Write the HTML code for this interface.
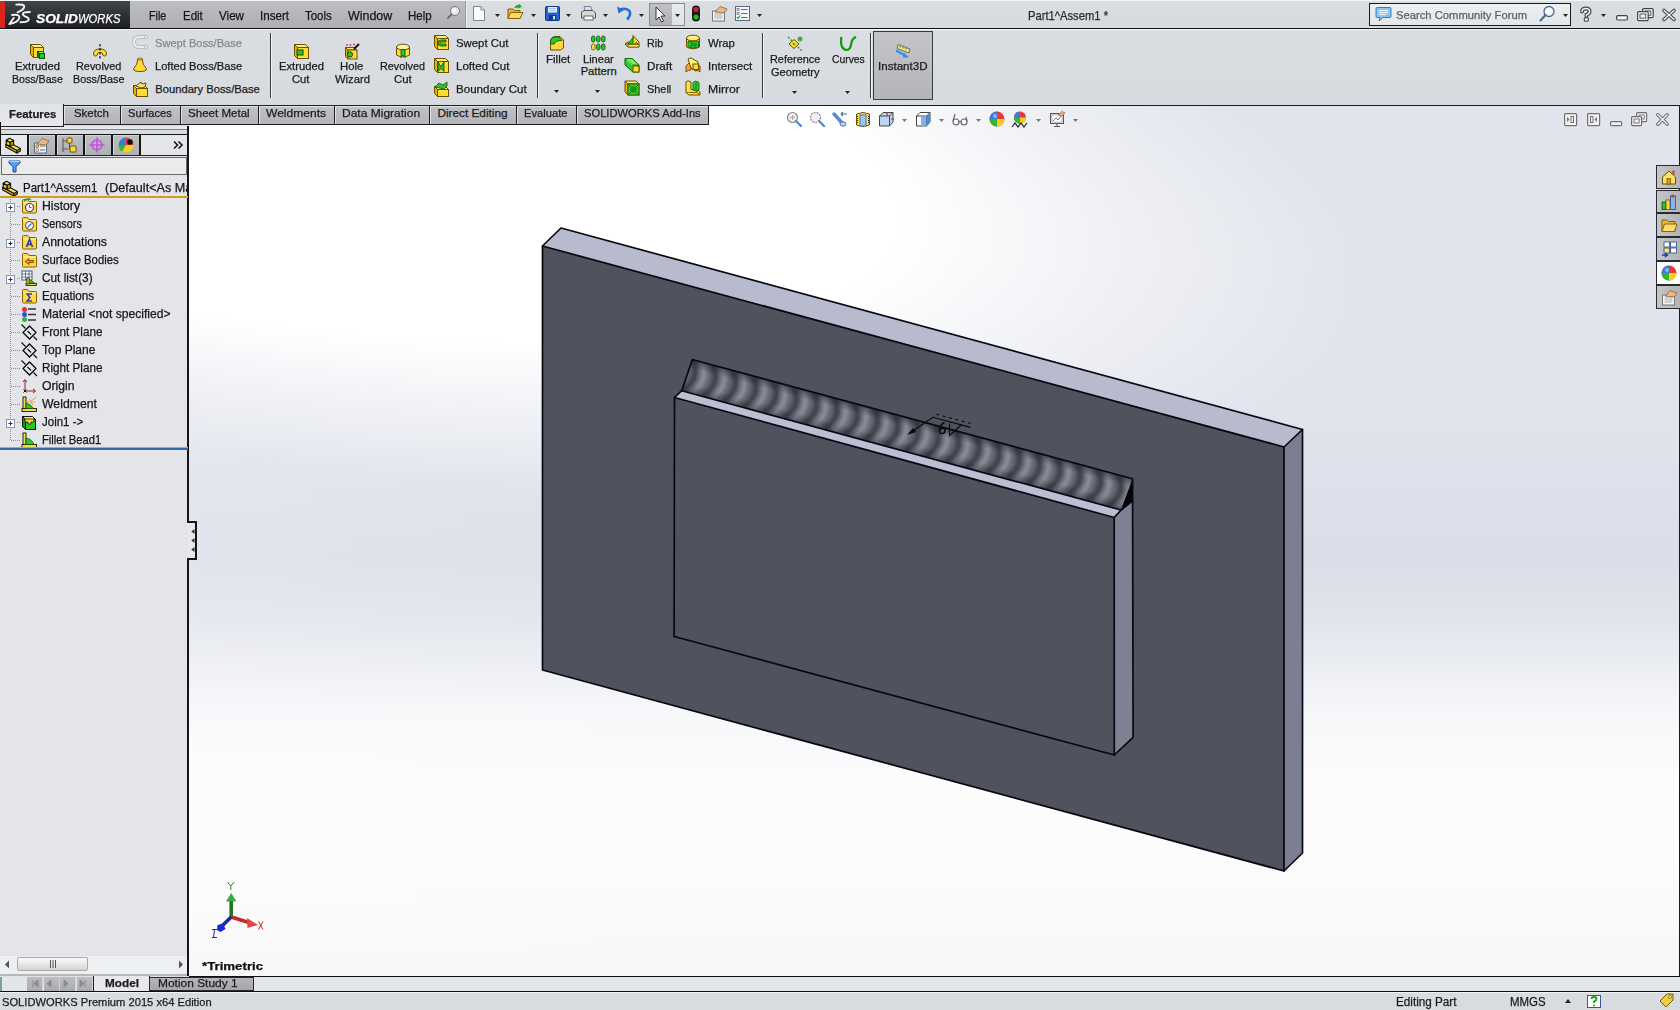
<!DOCTYPE html><html><head><meta charset="utf-8"><title>SOLIDWORKS</title><style>
html,body{margin:0;padding:0;}
body{width:1680px;height:1010px;position:relative;overflow:hidden;background:#dfe1e5;font-family:"Liberation Sans",sans-serif;}
.t{position:absolute;white-space:nowrap;-webkit-text-stroke:0.25px currentColor;}
svg{position:absolute;overflow:visible;}
</style></head><body>
<div style="position:absolute;left:0px;top:0px;width:1680px;height:28px;background:linear-gradient(#dadde2,#d7dadf);"></div>
<div style="position:absolute;left:0px;top:0px;width:1680px;height:1px;background:#f3f4f6;"></div>
<div style="position:absolute;left:0px;top:1px;width:5px;height:27px;background:#d9261c;"></div>
<div style="position:absolute;left:5px;top:1px;width:125px;height:27px;background:linear-gradient(#41454b,#1d1f23);"></div>
<div style="position:absolute;left:130px;top:1px;width:335px;height:27px;background:linear-gradient(#bcbec2,#adafb3);"></div>
<div style="position:absolute;left:465px;top:1px;width:1px;height:27px;background:#9a9ca0;"></div>
<div style="position:absolute;left:466px;top:1px;width:1px;height:27px;background:#eceef0;"></div>
<div style="position:absolute;left:0px;top:28px;width:1680px;height:1px;background:#101010;"></div>
<svg style="position:absolute;left:0px;top:0px;" width="40" height="28" viewBox="0 0 40 28"><path d="M16.3 4.6 Q24.5 3.8 24.3 6.8 Q23.6 10 17.6 12.3" fill="none" stroke="#f4f4f4" stroke-width="1.9" stroke-linecap="round"/><path d="M12 15 Q20.5 13.8 19.2 18.4 Q17.5 22.6 9.2 24.2 L13.8 17.9" fill="none" stroke="#f4f4f4" stroke-width="1.8" stroke-linejoin="round" stroke-linecap="round"/><path d="M29.8 11.9 Q22.8 11.9 22.8 14 Q23 16 27 17.2 Q29.5 18.5 28.2 20.6 Q26.5 22.3 20.5 22.3" fill="none" stroke="#f4f4f4" stroke-width="2" stroke-linecap="round"/></svg>
<div class="t" style="left:35.50px;top:12.03px;font-size:13.2px;line-height:13.2px;color:#fff;font-weight:bold;transform:scaleX(1.0423);transform-origin:0 0;font-style:italic;">SOLID</div>
<div class="t" style="left:77.50px;top:12.03px;font-size:13.2px;line-height:13.2px;color:#fff;font-weight:normal;transform:scaleX(0.8529);transform-origin:0 0;font-style:italic;">WORKS</div>
<div class="t" style="left:149.20px;top:9.89px;font-size:12.3px;line-height:12.3px;color:#161616;font-weight:normal;transform:scaleX(0.8725);transform-origin:0 0;">File</div>
<div class="t" style="left:183.10px;top:9.89px;font-size:12.3px;line-height:12.3px;color:#161616;font-weight:normal;transform:scaleX(0.9338);transform-origin:0 0;">Edit</div>
<div class="t" style="left:219.20px;top:9.89px;font-size:12.3px;line-height:12.3px;color:#161616;font-weight:normal;transform:scaleX(0.9456);transform-origin:0 0;">View</div>
<div class="t" style="left:259.60px;top:9.89px;font-size:12.3px;line-height:12.3px;color:#161616;font-weight:normal;transform:scaleX(0.9459);transform-origin:0 0;">Insert</div>
<div class="t" style="left:305.00px;top:9.89px;font-size:12.3px;line-height:12.3px;color:#161616;font-weight:normal;transform:scaleX(0.9297);transform-origin:0 0;">Tools</div>
<div class="t" style="left:347.70px;top:9.89px;font-size:12.3px;line-height:12.3px;color:#161616;font-weight:normal;transform:scaleX(1.0126);transform-origin:0 0;">Window</div>
<div class="t" style="left:408.00px;top:9.89px;font-size:12.3px;line-height:12.3px;color:#161616;font-weight:normal;transform:scaleX(0.9329);transform-origin:0 0;">Help</div>
<svg style="position:absolute;left:446px;top:5px;" width="14" height="14" viewBox="0 0 14 14"><circle cx="9" cy="6" r="4.5" fill="#e8e8e8" stroke="#777"/><circle cx="8" cy="5" r="2" fill="#fff"/><path d="M6 9 L1.5 13.5" stroke="#555" stroke-width="1.5"/></svg>
<svg style="position:absolute;left:471px;top:5px;" width="16" height="16" viewBox="0 0 16 16"><path d="M2.5 1.5 H10 L13.5 5 V15.5 H2.5 Z" fill="#fbfbfd" stroke="#7b8594"/><path d="M10 1.5 V5 H13.5" fill="#dfe4ea" stroke="#7b8594"/></svg>
<svg style="position:absolute;left:495px;top:14px;" width="5" height="3" viewBox="0 0 5 3"><path d="M0 0 H5 L2.5 3 Z" fill="#222"/></svg>
<svg style="position:absolute;left:507px;top:4px;" width="16" height="16" viewBox="0 0 16 16"><path d="M1 5 H6 L7.5 6.5 H13 V14.5 H1 Z" fill="#e9b53c" stroke="#8a6200"/><path d="M1 14.5 L3.5 8.5 H16 L13 14.5 Z" fill="#ffd966" stroke="#8a6200"/><path d="M8 4 Q10 1 13 2 L12 0.5 M13 2 L11 4" fill="none" stroke="#1fa81f" stroke-width="1.8"/></svg>
<svg style="position:absolute;left:531px;top:14px;" width="5" height="3" viewBox="0 0 5 3"><path d="M0 0 H5 L2.5 3 Z" fill="#222"/></svg>
<svg style="position:absolute;left:544px;top:5px;" width="16" height="16" viewBox="0 0 16 16"><rect x="1.5" y="1.5" width="14" height="14" rx="1" fill="#2a62c9" stroke="#0f3a8a"/><rect x="4" y="2" width="9" height="5.5" fill="#e8eef8"/><path d="M5 3.5 H12 M5 5.5 H12" stroke="#9fb3d6" stroke-width=".8"/><rect x="5" y="10" width="7" height="5.5" fill="#0f3a8a"/><rect x="9" y="11" width="2" height="3.5" fill="#cfe0ff"/></svg>
<svg style="position:absolute;left:566px;top:14px;" width="5" height="3" viewBox="0 0 5 3"><path d="M0 0 H5 L2.5 3 Z" fill="#222"/></svg>
<svg style="position:absolute;left:580px;top:5px;" width="16" height="16" viewBox="0 0 16 16"><path d="M4 1.5 H11 L12 6 H5 Z" fill="#cfe0f2" stroke="#7a8796"/><path d="M1.5 7 L4 5.5 H13 L15.5 8 V13 H1.5 Z" fill="#d8d8d8" stroke="#555"/><rect x="4" y="11" width="9" height="4" fill="#fff" stroke="#666"/></svg>
<svg style="position:absolute;left:603px;top:14px;" width="5" height="3" viewBox="0 0 5 3"><path d="M0 0 H5 L2.5 3 Z" fill="#222"/></svg>
<svg style="position:absolute;left:616px;top:5px;" width="16" height="16" viewBox="0 0 16 16"><path d="M3 5 Q10 2 13.5 6 Q15.5 10 11 14.5" fill="none" stroke="#1f73d6" stroke-width="2.6"/><path d="M1 1.5 L2.5 8.5 L8 5 Z" fill="#1f73d6"/></svg>
<svg style="position:absolute;left:639px;top:14px;" width="5" height="3" viewBox="0 0 5 3"><path d="M0 0 H5 L2.5 3 Z" fill="#222"/></svg>
<div style="position:absolute;left:649px;top:3px;width:36px;height:23px;background:linear-gradient(#e9eaec,#dfe1e4);border:1px solid #8a8c90;box-sizing:border-box;"></div>
<div style="position:absolute;left:650px;top:4px;width:22px;height:21px;background:linear-gradient(#bfc1c5,#b0b2b6);"></div>
<svg style="position:absolute;left:653px;top:6px;" width="16" height="16" viewBox="0 0 16 16"><path d="M3 1 V14 L6 11 L8.5 16 L10.5 15 L8 10 H12 Z" fill="#fff" stroke="#222" stroke-width=".9" stroke-linejoin="round"/></svg>
<svg style="position:absolute;left:675px;top:14px;" width="5" height="3" viewBox="0 0 5 3"><path d="M0 0 H5 L2.5 3 Z" fill="#222"/></svg>
<svg style="position:absolute;left:688px;top:5px;" width="16" height="17" viewBox="0 0 16 17"><rect x="4" y="0.5" width="8" height="16" rx="4" fill="#1a1a1a"/><circle cx="8" cy="4.5" r="2.5" fill="#e02020"/><circle cx="8" cy="12" r="2.5" fill="#20c020"/></svg>
<svg style="position:absolute;left:711px;top:5px;" width="16" height="16" viewBox="0 0 16 16"><rect x="1.5" y="6" width="12" height="10" fill="#f4f4f4" stroke="#777"/><path d="M3.5 9 H11.5 M3.5 11 H11.5 M3.5 13 H11.5" stroke="#999" stroke-width=".8"/><path d="M4 7 L9 1.5 L16 4 L13 8 Z" fill="#e6b98a" stroke="#8a6030" stroke-width=".8"/></svg>
<svg style="position:absolute;left:734px;top:5px;" width="16" height="16" viewBox="0 0 16 16"><rect x="1.5" y="1.5" width="14" height="14" fill="#f6f8fb" stroke="#5a6b80"/><rect x="3" y="3.5" width="2" height="2" fill="none" stroke="#5a6b80" stroke-width=".7"/><rect x="3" y="7.5" width="2" height="2" fill="none" stroke="#5a6b80" stroke-width=".7"/><path d="M3 12 L4 13.5 L6 10.5" stroke="#1a9a1a" stroke-width="1.2" fill="none"/><path d="M7 4.5 H13.5 M7 8.5 H13.5 M7 12.5 H13.5" stroke="#5a6b80" stroke-width="1"/></svg>
<svg style="position:absolute;left:757px;top:14px;" width="5" height="3" viewBox="0 0 5 3"><path d="M0 0 H5 L2.5 3 Z" fill="#222"/></svg>
<div class="t" style="left:1028.00px;top:9.96px;font-size:12.1px;line-height:12.1px;color:#2a2a2a;font-weight:normal;transform:scaleX(0.9265);transform-origin:0 0;">Part1^Assem1 *</div>
<div style="position:absolute;left:1369px;top:3px;width:202px;height:23px;border:1px solid #1a1a1a;background:linear-gradient(#eef0f3,#e3e6ea);box-sizing:border-box;"></div>
<svg style="position:absolute;left:1375px;top:6px;" width="17" height="16" viewBox="0 0 17 16"><path d="M2 1.5 H15 Q16 1.5 16 3 V10 Q16 11.5 15 11.5 H8 L4 15 L5 11.5 H2 Q1 11.5 1 10 V3 Q1 1.5 2 1.5Z" fill="#8cc4f0" stroke="#3a7ac0"/><path d="M4 4.5 H13 M4 6.5 H13 M4 8.5 H11" stroke="#fff" stroke-width=".9"/></svg>
<div class="t" style="left:1396.00px;top:10.13px;font-size:11.3px;line-height:11.3px;color:#5d6066;font-weight:normal;transform:scaleX(0.9936);transform-origin:0 0;">Search Community Forum</div>
<svg style="position:absolute;left:1539px;top:5px;" width="17" height="17" viewBox="0 0 17 17"><circle cx="10" cy="6.5" r="5" fill="#f4f8fc" stroke="#4a6a90" stroke-width="1.3"/><path d="M6.5 10 L1.5 15.5" stroke="#4a6a90" stroke-width="2.2" stroke-linecap="round"/></svg>
<svg style="position:absolute;left:1563px;top:14px;" width="5" height="3" viewBox="0 0 5 3"><path d="M0 0 H5 L2.5 3 Z" fill="#222"/></svg>
<svg style="position:absolute;left:1579px;top:7px;" width="13" height="15" viewBox="0 0 13 15"><path d="M3 4.5 Q3 1.5 6.8 1.5 Q10.6 1.5 10.6 4.5 Q10.6 6.8 7.5 7.8 V9" fill="none" stroke="#444" stroke-width="3.8" stroke-linecap="round"/><path d="M3 4.5 Q3 1.5 6.8 1.5 Q10.6 1.5 10.6 4.5 Q10.6 6.8 7.5 7.8 V9" fill="none" stroke="#f4f4f4" stroke-width="1.4" stroke-linecap="round"/><rect x="5.3" y="10.6" width="4" height="3.6" rx="1" fill="#f4f4f4" stroke="#444" stroke-width="1.1"/></svg>
<svg style="position:absolute;left:1601px;top:14px;" width="5" height="3" viewBox="0 0 5 3"><path d="M0 0 H5 L2.5 3 Z" fill="#222"/></svg>
<svg style="position:absolute;left:1616px;top:15px;" width="12" height="6" viewBox="0 0 12 6"><rect x="0.6" y="0.6" width="10.8" height="4.4" rx="1.2" fill="#f4f4f4" stroke="#444" stroke-width="1.2"/></svg>
<svg style="position:absolute;left:1637px;top:8px;" width="17" height="13" viewBox="0 0 17 13"><rect x="5.6" y="0.6" width="10.6" height="9" rx="1" fill="#f4f4f4" stroke="#444" stroke-width="1.2"/><rect x="8" y="3" width="5.8" height="4.2" fill="none" stroke="#444" stroke-width=".9"/><rect x="0.6" y="3.6" width="10.6" height="9" rx="1" fill="#f4f4f4" stroke="#444" stroke-width="1.2"/><rect x="3" y="6" width="5.8" height="4.2" fill="none" stroke="#444" stroke-width=".9"/></svg>
<svg style="position:absolute;left:1662px;top:9px;" width="14" height="12" viewBox="0 0 14 12"><path d="M2 1.5 L12 10.5 M12 1.5 L2 10.5" stroke="#444" stroke-width="3.6" stroke-linecap="round"/><path d="M2 1.5 L12 10.5 M12 1.5 L2 10.5" stroke="#f4f4f4" stroke-width="1.4" stroke-linecap="round"/></svg>
<div style="position:absolute;left:0px;top:29px;width:1680px;height:76px;background:linear-gradient(#dadde2,#d7dadf);"></div>
<div style="position:absolute;left:0px;top:29px;width:1680px;height:1px;background:#f4f5f7;"></div>
<div style="position:absolute;left:270px;top:33px;width:1px;height:65px;background:#3a3a3a;"></div>
<div style="position:absolute;left:271px;top:33px;width:1px;height:65px;background:#f2f3f5;"></div>
<div style="position:absolute;left:537px;top:33px;width:1px;height:65px;background:#3a3a3a;"></div>
<div style="position:absolute;left:538px;top:33px;width:1px;height:65px;background:#f2f3f5;"></div>
<div style="position:absolute;left:762px;top:33px;width:1px;height:65px;background:#3a3a3a;"></div>
<div style="position:absolute;left:763px;top:33px;width:1px;height:65px;background:#f2f3f5;"></div>
<div style="position:absolute;left:870px;top:33px;width:1px;height:65px;background:#3a3a3a;"></div>
<div style="position:absolute;left:871px;top:33px;width:1px;height:65px;background:#f2f3f5;"></div>
<div style="position:absolute;left:873px;top:31px;width:60px;height:69px;background:linear-gradient(#c3c5c9,#b3b5b9);border:1px solid #3c3c3c;box-sizing:border-box;"></div>
<svg style="position:absolute;left:29px;top:43px;" width="16" height="16" viewBox="0 0 16 16"><path d="M1.5 1.5 H11.5 L14.5 4.5 H4.5 Z" fill="#fff27a" stroke="#6b5000" stroke-width="1" stroke-linejoin="round"/><path d="M1.5 1.5 L4.5 4.5 V14.5 L1.5 11.5 Z" fill="#e8b400" stroke="#6b5000" stroke-width="1" stroke-linejoin="round"/><rect x="4.5" y="4.5" width="10" height="10" fill="#ffdc2e" stroke="#6b5000" stroke-width="1"/><path d="M8.5 8.5 H13.5 L15.5 10.5 H10.5 Z" fill="#8fff6a" stroke="#0b4d0b" stroke-width="1" stroke-linejoin="round"/><path d="M8.5 8.5 L10.5 10.5 V15.5 L8.5 13.5 Z" fill="#138a13" stroke="#0b4d0b" stroke-width="1" stroke-linejoin="round"/><rect x="10.5" y="10.5" width="5" height="5" fill="#2ec42e" stroke="#0b4d0b" stroke-width="1"/></svg>
<div class="t" style="left:14.50px;top:60.92px;font-size:11.2px;line-height:11.2px;color:#1b1b1b;font-weight:normal;transform:scaleX(1.0049);transform-origin:0 0;">Extruded</div>
<div class="t" style="left:11.70px;top:73.92px;font-size:11.2px;line-height:11.2px;color:#1b1b1b;font-weight:normal;transform:scaleX(0.9498);transform-origin:0 0;">Boss/Base</div>
<svg style="position:absolute;left:92px;top:43px;" width="16" height="16" viewBox="0 0 16 16"><path d="M1.5 11 Q1.5 6 8 6 Q14.5 6 14.5 11 Q14.5 13 12.5 13 Q10.5 13 10.5 11 Q10.5 9.5 8 9.5 Q5.5 9.5 5.5 11 Q5.5 13 3.5 13 Q1.5 13 1.5 11Z" fill="#ffd93a" stroke="#6b5000"/><path d="M8 1 V16" stroke="#111" stroke-width="1.2" stroke-dasharray="2.5 1.5"/></svg>
<div class="t" style="left:76.30px;top:60.92px;font-size:11.2px;line-height:11.2px;color:#1b1b1b;font-weight:normal;transform:scaleX(0.9734);transform-origin:0 0;">Revolved</div>
<div class="t" style="left:73.30px;top:73.92px;font-size:11.2px;line-height:11.2px;color:#1b1b1b;font-weight:normal;transform:scaleX(0.9610);transform-origin:0 0;">Boss/Base</div>
<svg style="position:absolute;left:132px;top:34px;" width="16" height="16" viewBox="0 0 16 16"><path d="M14 3 H7 Q2 3 2 8 Q2 13 7 13 H14" fill="none" stroke="#bdbdbd" stroke-width="4"/><path d="M14 3 H7 Q2 3 2 8 Q2 13 7 13 H14" fill="none" stroke="#ececec" stroke-width="2"/><ellipse cx="14" cy="3" rx="1.5" ry="2" fill="#eee" stroke="#bbb"/><ellipse cx="14" cy="13" rx="1.5" ry="2" fill="#eee" stroke="#bbb"/></svg>
<div class="t" style="left:155.00px;top:37.92px;font-size:11.2px;line-height:11.2px;color:#85888d;font-weight:normal;transform:scaleX(0.9922);transform-origin:0 0;">Swept Boss/Base</div>
<svg style="position:absolute;left:132px;top:57px;" width="16" height="16" viewBox="0 0 16 16"><path d="M6 1.5 H10 Q10.5 8 14.5 12 Q14.5 14.5 8 14.5 Q1.5 14.5 1.5 12 Q5.5 8 6 1.5Z" fill="#ffd93a" stroke="#6b5000"/><ellipse cx="8" cy="2" rx="2" ry="1" fill="#fff3a6" stroke="#6b5000" stroke-width=".8"/></svg>
<div class="t" style="left:155.30px;top:60.92px;font-size:11.2px;line-height:11.2px;color:#1b1b1b;font-weight:normal;transform:scaleX(0.9943);transform-origin:0 0;">Lofted Boss/Base</div>
<svg style="position:absolute;left:132px;top:80px;" width="16" height="16" viewBox="0 0 16 16"><path d="M1.5 5.5 H12.5 L15.5 8.5 H4.5 Z" fill="#fff27a" stroke="#6b5000" stroke-width="1" stroke-linejoin="round"/><path d="M1.5 5.5 L4.5 8.5 V16.5 L1.5 13.5 Z" fill="#e8b400" stroke="#6b5000" stroke-width="1" stroke-linejoin="round"/><rect x="4.5" y="8.5" width="11" height="8" fill="#ffdc2e" stroke="#6b5000" stroke-width="1"/><path d="M4 6 L9 2 L10 4 L14 3 L13 7 L9 8 Z" fill="#ffe066" stroke="#6b5000"/></svg>
<div class="t" style="left:155.30px;top:83.92px;font-size:11.2px;line-height:11.2px;color:#1b1b1b;font-weight:normal;">Boundary Boss/Base</div>
<svg style="position:absolute;left:293px;top:43px;" width="16" height="16" viewBox="0 0 16 16"><path d="M1.5 1.5 H12.5 L15.5 4.5 H4.5 Z" fill="#fff27a" stroke="#6b5000" stroke-width="1" stroke-linejoin="round"/><path d="M1.5 1.5 L4.5 4.5 V15.5 L1.5 12.5 Z" fill="#e8b400" stroke="#6b5000" stroke-width="1" stroke-linejoin="round"/><rect x="4.5" y="4.5" width="11" height="11" fill="#ffdc2e" stroke="#6b5000" stroke-width="1"/><rect x="4" y="7" width="6" height="5" fill="#2ec42e" stroke="#0b4d0b"/></svg>
<div class="t" style="left:278.70px;top:60.92px;font-size:11.2px;line-height:11.2px;color:#1b1b1b;font-weight:normal;transform:scaleX(1.0049);transform-origin:0 0;">Extruded</div>
<div class="t" style="left:292.45px;top:73.92px;font-size:11.2px;line-height:11.2px;color:#1b1b1b;font-weight:normal;transform:scaleX(1.0045);transform-origin:0 0;">Cut</div>
<svg style="position:absolute;left:344px;top:43px;" width="16" height="16" viewBox="0 0 16 16"><path d="M1.5 4.5 H10.5 L13.0 7.0 H4.0 Z" fill="#fff27a" stroke="#6b5000" stroke-width="1" stroke-linejoin="round"/><path d="M1.5 4.5 L4.0 7.0 V16.0 L1.5 13.5 Z" fill="#e8b400" stroke="#6b5000" stroke-width="1" stroke-linejoin="round"/><rect x="4.0" y="7.0" width="9" height="9" fill="#ffdc2e" stroke="#6b5000" stroke-width="1"/><circle cx="6" cy="11.5" r="2.6" fill="#2ec42e" stroke="#0b4d0b"/><path d="M10 6 L15 1" stroke="#111" stroke-width="2"/><circle cx="3" cy="2" r=".9" fill="#d33"/><circle cx="6.5" cy="2" r=".9" fill="#d33"/><circle cx="10" cy="1.5" r=".9" fill="#d33"/></svg>
<div class="t" style="left:340.30px;top:60.92px;font-size:11.2px;line-height:11.2px;color:#1b1b1b;font-weight:normal;transform:scaleX(1.0167);transform-origin:0 0;">Hole</div>
<div class="t" style="left:334.70px;top:73.92px;font-size:11.2px;line-height:11.2px;color:#1b1b1b;font-weight:normal;transform:scaleX(1.0054);transform-origin:0 0;">Wizard</div>
<svg style="position:absolute;left:395px;top:43px;" width="16" height="16" viewBox="0 0 16 16"><path d="M1.5 4 V12 Q8 16 14.5 12 V4" fill="#ffd93a" stroke="#6b5000"/><ellipse cx="8" cy="4" rx="6.5" ry="2.8" fill="#fff3a6" stroke="#6b5000"/><path d="M6 6.5 L6 14.5 L8 12 L10 14.5 L10 6.5 Z" fill="#2ec42e" stroke="#0b4d0b" stroke-width=".8"/></svg>
<div class="t" style="left:380.30px;top:60.92px;font-size:11.2px;line-height:11.2px;color:#1b1b1b;font-weight:normal;transform:scaleX(0.9648);transform-origin:0 0;">Revolved</div>
<div class="t" style="left:394.20px;top:73.92px;font-size:11.2px;line-height:11.2px;color:#1b1b1b;font-weight:normal;transform:scaleX(1.0217);transform-origin:0 0;">Cut</div>
<svg style="position:absolute;left:433px;top:34px;" width="16" height="16" viewBox="0 0 16 16"><path d="M1.5 1.5 H12.5 L15.5 4.5 H4.5 Z" fill="#fff27a" stroke="#6b5000" stroke-width="1" stroke-linejoin="round"/><path d="M1.5 1.5 L4.5 4.5 V15.5 L1.5 12.5 Z" fill="#e8b400" stroke="#6b5000" stroke-width="1" stroke-linejoin="round"/><rect x="4.5" y="4.5" width="11" height="11" fill="#ffdc2e" stroke="#6b5000" stroke-width="1"/><path d="M13 6 H8 Q5 6 5 9 Q5 12 8 12 H13 V10 H8 Q7 10 7 9 Q7 8 8 8 H13Z" fill="#2ec42e" stroke="#0b4d0b" stroke-width=".8"/></svg>
<div class="t" style="left:456.30px;top:37.92px;font-size:11.2px;line-height:11.2px;color:#1b1b1b;font-weight:normal;transform:scaleX(1.0150);transform-origin:0 0;">Swept Cut</div>
<svg style="position:absolute;left:433px;top:57px;" width="16" height="16" viewBox="0 0 16 16"><path d="M1.5 1.5 H12.5 L15.5 4.5 H4.5 Z" fill="#fff27a" stroke="#6b5000" stroke-width="1" stroke-linejoin="round"/><path d="M1.5 1.5 L4.5 4.5 V15.5 L1.5 12.5 Z" fill="#e8b400" stroke="#6b5000" stroke-width="1" stroke-linejoin="round"/><rect x="4.5" y="4.5" width="11" height="11" fill="#ffdc2e" stroke="#6b5000" stroke-width="1"/><path d="M5 4.5 L8 10 L11 4.5 L11 14.5 L8 11.5 L5 14.5 Z" fill="#2ec42e" stroke="#0b4d0b" stroke-width=".8"/></svg>
<div class="t" style="left:456.30px;top:60.92px;font-size:11.2px;line-height:11.2px;color:#1b1b1b;font-weight:normal;transform:scaleX(1.0344);transform-origin:0 0;">Lofted Cut</div>
<svg style="position:absolute;left:433px;top:80px;" width="16" height="16" viewBox="0 0 16 16"><path d="M1.5 6.5 H12.5 L15.5 9.5 H4.5 Z" fill="#fff27a" stroke="#6b5000" stroke-width="1" stroke-linejoin="round"/><path d="M1.5 6.5 L4.5 9.5 V16.5 L1.5 13.5 Z" fill="#e8b400" stroke="#6b5000" stroke-width="1" stroke-linejoin="round"/><rect x="4.5" y="9.5" width="11" height="7" fill="#ffdc2e" stroke="#6b5000" stroke-width="1"/><path d="M2 7 L6 3 L10 5 L14 2 L14 6 L11 9 Z" fill="#2ec42e" stroke="#0b4d0b" stroke-width=".8"/></svg>
<div class="t" style="left:456.30px;top:83.92px;font-size:11.2px;line-height:11.2px;color:#1b1b1b;font-weight:normal;transform:scaleX(1.0333);transform-origin:0 0;">Boundary Cut</div>
<svg style="position:absolute;left:549px;top:35px;" width="16" height="16" viewBox="0 0 16 16"><path d="M1.5 7 Q1.5 1.5 7 1.5 H11 L14.5 5 V13 L11.5 15 H1.5 Z" fill="#ffd93a" stroke="#6b5000"/><path d="M1.5 7.5 Q1.5 2 7 2 H10 L13 5.5 Q6 5.5 5.5 9 H1.5Z" fill="#2ec42e" stroke="#0b4d0b" stroke-width=".8"/></svg>
<div class="t" style="left:545.75px;top:53.72px;font-size:11.2px;line-height:11.2px;color:#1b1b1b;font-weight:normal;transform:scaleX(1.0286);transform-origin:0 0;">Fillet</div>
<svg style="position:absolute;left:554px;top:90px;" width="5" height="3" viewBox="0 0 5 3"><path d="M0 0 H5 L2.5 3 Z" fill="#222"/></svg>
<svg style="position:absolute;left:590px;top:35px;" width="16" height="16" viewBox="0 0 16 16"><rect x="1.5" y="1" width="3.5" height="6" rx="1.7" fill="#2ec42e" stroke="#0b4d0b" stroke-width=".8"/><rect x="1.5" y="9" width="3.5" height="6" rx="1.7" fill="#ffd93a" stroke="#6b5000" stroke-width=".8"/><rect x="6.5" y="1" width="3.5" height="6" rx="1.7" fill="#2ec42e" stroke="#0b4d0b" stroke-width=".8"/><rect x="6.5" y="9" width="3.5" height="6" rx="1.7" fill="#2ec42e" stroke="#0b4d0b" stroke-width=".8"/><rect x="11.5" y="1" width="3.5" height="6" rx="1.7" fill="#2ec42e" stroke="#0b4d0b" stroke-width=".8"/><rect x="11.5" y="9" width="3.5" height="6" rx="1.7" fill="#2ec42e" stroke="#0b4d0b" stroke-width=".8"/></svg>
<div class="t" style="left:583.20px;top:53.72px;font-size:11.2px;line-height:11.2px;color:#1b1b1b;font-weight:normal;transform:scaleX(0.9901);transform-origin:0 0;">Linear</div>
<div class="t" style="left:580.65px;top:66.42px;font-size:11.2px;line-height:11.2px;color:#1b1b1b;font-weight:normal;">Pattern</div>
<svg style="position:absolute;left:595px;top:90px;" width="5" height="3" viewBox="0 0 5 3"><path d="M0 0 H5 L2.5 3 Z" fill="#222"/></svg>
<svg style="position:absolute;left:624px;top:34px;" width="16" height="16" viewBox="0 0 16 16"><path d="M1 10 L4 13 H15 V8 L9 1.5 V8 H4 Z" fill="#ffdc2e" stroke="#6b5000"/><path d="M1 10 H12 V8 L15 11" fill="none" stroke="#6b5000"/><path d="M4 10 L9 3.5 V10 Z" fill="#2ad02a" stroke="#0b5a0b" stroke-width=".8"/><path d="M4 13 H15 V10.5 H4 Z" fill="#ffe866" stroke="#6b5000" stroke-width=".8"/></svg>
<div class="t" style="left:647.30px;top:37.72px;font-size:11.2px;line-height:11.2px;color:#1b1b1b;font-weight:normal;transform:scaleX(0.9585);transform-origin:0 0;">Rib</div>
<svg style="position:absolute;left:624px;top:57px;" width="16" height="16" viewBox="0 0 16 16"><path d="M1 1.5 H8 L15 8 V15 H9 L1 8 Z" fill="#2ad02a" stroke="#0b5a0b"/><path d="M1 1.5 H8 L15 8 H9 Z" fill="#7cf25a" stroke="#0b5a0b" stroke-width=".8"/><path d="M2.5 3 L9 8.5" stroke="#b8ff9a" stroke-width=".8"/><rect x="9" y="9" width="6" height="6" fill="#ffdc2e" stroke="#6b5000"/></svg>
<div class="t" style="left:647.30px;top:60.72px;font-size:11.2px;line-height:11.2px;color:#1b1b1b;font-weight:normal;transform:scaleX(1.0433);transform-origin:0 0;">Draft</div>
<svg style="position:absolute;left:624px;top:80px;" width="16" height="16" viewBox="0 0 16 16"><path d="M1 1 H12 L15 4 H4 Z" fill="#fff27a" stroke="#6b5000" stroke-width="1" stroke-linejoin="round"/><path d="M1 1 L4 4 V15 L1 12 Z" fill="#e8b400" stroke="#6b5000" stroke-width="1" stroke-linejoin="round"/><rect x="4" y="4" width="11" height="11" fill="#ffdc2e" stroke="#6b5000" stroke-width="1"/><rect x="4" y="4" width="11" height="11" fill="#2ad02a" stroke="#6b5000"/><rect x="6.5" y="6.5" width="6" height="6" fill="#13961a"/><path d="M4 4 L6.5 6.5 M15 15 L12.5 12.5 M4 15 L6.5 12.5 M15 4 L12.5 6.5" stroke="#0b6b0b" stroke-width=".8"/></svg>
<div class="t" style="left:647.30px;top:83.72px;font-size:11.2px;line-height:11.2px;color:#1b1b1b;font-weight:normal;transform:scaleX(0.9763);transform-origin:0 0;">Shell</div>
<svg style="position:absolute;left:685px;top:34px;" width="16" height="16" viewBox="0 0 16 16"><path d="M1.5 4 V13 Q8 16.5 14.5 13 V4" fill="#ffdc2e" stroke="#6b5000"/><ellipse cx="8" cy="4" rx="6.5" ry="2.8" fill="#fff27a" stroke="#6b5000"/><path d="M3 7 Q8 8.5 13.5 7 V13 Q8 15 3 13 Z" fill="#2ad02a" stroke="#0b5a0b" stroke-width=".8"/><path d="M5 9 H7 V12 H5 M9 9 V12 H11 V9" fill="none" stroke="#0b5a0b" stroke-width=".9"/></svg>
<div class="t" style="left:708.20px;top:37.72px;font-size:11.2px;line-height:11.2px;color:#1b1b1b;font-weight:normal;transform:scaleX(1.0139);transform-origin:0 0;">Wrap</div>
<svg style="position:absolute;left:685px;top:57px;" width="16" height="16" viewBox="0 0 16 16"><path d="M1 9 L4 6 L6 8 V13 Q3 12.5 1 15 Z" fill="#f5a830" stroke="#8a4a00"/><path d="M12 8 L15 9 V15 Q13 12.5 10 14 Z" fill="#f5a830" stroke="#8a4a00"/><path d="M3 2 L6 0.8 L13 5 V12 L10 13.5 L6 11 Z" fill="#fff27a" stroke="#6b5000"/><rect x="8" y="7" width="5.5" height="5.5" fill="#ffdc2e" stroke="#6b5000"/></svg>
<div class="t" style="left:707.80px;top:60.72px;font-size:11.2px;line-height:11.2px;color:#1b1b1b;font-weight:normal;transform:scaleX(1.0302);transform-origin:0 0;">Intersect</div>
<svg style="position:absolute;left:685px;top:80px;" width="16" height="16" viewBox="0 0 16 16"><path d="M1 2 L3 0.8 L6 2 V9.5 H12 L15 12 V15 H4 L1 12.5 Z" fill="#ffdc2e" stroke="#6b5000"/><path d="M1 12.5 H12 L15 15 M12 12.5 V9.5" fill="none" stroke="#6b5000" stroke-width=".8"/><path d="M3 2 V12.5" stroke="#fff27a"/><path d="M8 2.5 L10.5 1 L14 2.5 V10 L11 11 L8 10 Z" fill="#2ad02a" stroke="#0b5a0b" stroke-width=".8"/><path d="M11 2.5 V11" stroke="#0b5a0b" stroke-width=".7"/></svg>
<div class="t" style="left:708.20px;top:83.72px;font-size:11.2px;line-height:11.2px;color:#1b1b1b;font-weight:normal;transform:scaleX(1.0918);transform-origin:0 0;">Mirror</div>
<svg style="position:absolute;left:787px;top:36px;" width="16" height="16" viewBox="0 0 16 16"><path d="M1 1 L15 15" stroke="#139913" stroke-width="1.2" stroke-dasharray="2 1.5"/><path d="M7 3.5 L12 8 L7 12.5 L2 8 Z" fill="#ffe033" stroke="#6b5000"/><path d="M6 7 L8 9" stroke="#139913" stroke-width="1.5"/><path d="M13 0 V6 M10 3 H16 M11 1 L15 5 M15 1 L11 5" stroke="#139913" stroke-width=".9"/></svg>
<div class="t" style="left:770.35px;top:53.72px;font-size:11.2px;line-height:11.2px;color:#1b1b1b;font-weight:normal;transform:scaleX(0.9743);transform-origin:0 0;">Reference</div>
<div class="t" style="left:771.40px;top:66.72px;font-size:11.2px;line-height:11.2px;color:#1b1b1b;font-weight:normal;transform:scaleX(0.9893);transform-origin:0 0;">Geometry</div>
<svg style="position:absolute;left:792px;top:91px;" width="5" height="3" viewBox="0 0 5 3"><path d="M0 0 H5 L2.5 3 Z" fill="#222"/></svg>
<svg style="position:absolute;left:840px;top:36px;" width="16" height="16" viewBox="0 0 16 16"><path d="M1.2 1.8 Q0.2 12 5 13.6 Q10 14.8 11 9 Q11.6 3 15.2 1.2" fill="none" stroke="#149a14" stroke-width="2.3" stroke-linecap="round"/></svg>
<div class="t" style="left:831.70px;top:53.72px;font-size:11.2px;line-height:11.2px;color:#1b1b1b;font-weight:normal;transform:scaleX(0.9256);transform-origin:0 0;">Curves</div>
<svg style="position:absolute;left:845px;top:91px;" width="5" height="3" viewBox="0 0 5 3"><path d="M0 0 H5 L2.5 3 Z" fill="#222"/></svg>
<svg style="position:absolute;left:895px;top:43px;" width="16" height="16" viewBox="0 0 16 16"><path d="M3 1.5 L15 6 L14 10 L2 5.5 Z" fill="#e7e27a" stroke="#555" stroke-width=".8"/><path d="M5 3 V4.5 M8 4 V5.5 M11 5 V6.5" stroke="#555" stroke-width=".8"/><path d="M1 7.5 L11 13" stroke="#2a8ef0" stroke-width="2"/><path d="M9 10 L14 14.5 L8 14.5 Z" fill="#2a8ef0"/></svg>
<div class="t" style="left:878.05px;top:61.02px;font-size:11.2px;line-height:11.2px;color:#1b1b1b;font-weight:normal;transform:scaleX(1.0336);transform-origin:0 0;">Instant3D</div>
<div style="position:absolute;left:189px;top:106px;width:1490px;height:870px;background:linear-gradient(180deg,rgb(226,229,237) 0%,rgb(224,227,236) 38%,rgb(219,222,232) 52%,rgb(225,228,236) 59%,rgb(247,248,250) 70%,rgb(253,253,254) 80%,rgb(251,251,252) 90%,rgb(246,247,249) 100%);"></div>
<svg style="position:absolute;left:189px;top:106px;overflow:hidden;" width="1490" height="870" viewBox="0 0 1490 870"><defs><radialGradient id="wb" gradientUnits="userSpaceOnUse" cx="0" cy="0" r="1" gradientTransform="rotate(10) scale(1200,340)"><stop offset="0" stop-color="#fff" stop-opacity="1"/><stop offset="0.6" stop-color="#fff" stop-opacity="1"/><stop offset="0.8" stop-color="#fff" stop-opacity="0.45"/><stop offset="1" stop-color="#fff" stop-opacity="0"/></radialGradient></defs><rect width="1490" height="870" fill="url(#wb)"/></svg>
<div style="position:absolute;left:189px;top:106px;width:1490px;height:870px;background:linear-gradient(90deg,rgba(255,255,255,0.18) 0%,rgba(255,255,255,0) 50%);"></div>
<div style="position:absolute;left:63px;top:105px;width:1617px;height:1px;background:#1a1a1a;"></div>
<div style="position:absolute;left:1679px;top:106px;width:1px;height:870px;background:#1a1a1a;"></div>
<div style="position:absolute;left:189px;top:976px;width:1491px;height:1px;background:#101010;"></div>
<svg style="position:absolute;left:786px;top:111px;" width="16" height="16" viewBox="0 0 16 16"><circle cx="6.5" cy="6.5" r="5" fill="#f0f0f0" stroke="#8a8a8a" stroke-width="1.2"/><path d="M4 6.5 H9 M6.5 4 V9" stroke="#aaa" stroke-width="1"/><path d="M10 10 L15 15" stroke="#5a8ad0" stroke-width="2.4" stroke-linecap="round"/></svg>
<svg style="position:absolute;left:809px;top:111px;" width="16" height="16" viewBox="0 0 16 16"><circle cx="6.5" cy="6.5" r="5" fill="#f0f0f0" stroke="#8a8a8a" stroke-width="1.2" stroke-dasharray="2 1"/><path d="M10 10 L15 15" stroke="#5a8ad0" stroke-width="2.4" stroke-linecap="round"/></svg>
<svg style="position:absolute;left:832px;top:111px;" width="16" height="16" viewBox="0 0 16 16"><path d="M2 3 L11 13" stroke="#5a8ad0" stroke-width="3.5" stroke-linecap="round"/><ellipse cx="11" cy="13" rx="3" ry="2.2" fill="#bcd6f2" stroke="#4a74b0"/><path d="M9 3 H15 M9 3 L11 1 M9 3 L11 5" stroke="#4a74b0" stroke-width="1.2" fill="none"/></svg>
<svg style="position:absolute;left:855px;top:111px;" width="16" height="16" viewBox="0 0 16 16"><path d="M1.5 3 Q8 0 14.5 3 V14 Q8 17 1.5 14 Z" fill="#ffdf4a" stroke="#6b5000"/><rect x="5" y="4" width="6" height="11" fill="#9cc4ee" stroke="#4a74b0"/><path d="M2.5 5 V13 M13.5 5 V13" stroke="#222" stroke-dasharray="1 1"/></svg>
<svg style="position:absolute;left:878px;top:111px;" width="16" height="16" viewBox="0 0 16 16"><path d="M1.5 5 L5 1.5 H15 V11 L11.5 15 H1.5 Z" fill="#bcd6f2" stroke="#444"/><path d="M1.5 5 H11.5 V15 M11.5 5 L15 1.5" fill="none" stroke="#444"/><path d="M9 1.5 V5 M13 8 H16" stroke="#d22" stroke-width="1.2"/></svg>
<svg style="position:absolute;left:902px;top:119px;" width="5" height="3" viewBox="0 0 5 3"><path d="M0 0 H5 L2.5 3 Z" fill="#777"/></svg>
<svg style="position:absolute;left:915px;top:111px;" width="16" height="16" viewBox="0 0 16 16"><path d="M1.5 5 L5 1.5 H15 V11 L11.5 15 H1.5 Z" fill="#fff" stroke="#444"/><path d="M1.5 5 H11.5 V15 M11.5 5 L15 1.5" fill="none" stroke="#444"/><rect x="6" y="5.5" width="5.5" height="9.5" fill="#7fb2ea"/><path d="M11.5 5 L15 1.5 V11 L11.5 15Z" fill="#4a8ad8"/></svg>
<svg style="position:absolute;left:939px;top:119px;" width="5" height="3" viewBox="0 0 5 3"><path d="M0 0 H5 L2.5 3 Z" fill="#777"/></svg>
<svg style="position:absolute;left:952px;top:111px;" width="16" height="16" viewBox="0 0 16 16"><circle cx="4" cy="11" r="3" fill="none" stroke="#666" stroke-width="1.2"/><circle cx="12" cy="11" r="3" fill="none" stroke="#666" stroke-width="1.2"/><path d="M7 11 Q8 9.5 9 11 M1 10 L3 3 M15 10 L14 6" stroke="#666" stroke-width="1.2" fill="none"/></svg>
<svg style="position:absolute;left:976px;top:119px;" width="5" height="3" viewBox="0 0 5 3"><path d="M0 0 H5 L2.5 3 Z" fill="#777"/></svg>
<svg style="position:absolute;left:989px;top:111px;" width="16" height="16" viewBox="0 0 16 16"><circle cx="8" cy="8" r="7.5" fill="#e83838"/><path d="M8 8 L8 0.5 A7.5 7.5 0 0 0 0.5 8 Z" fill="#3a7be0"/><path d="M8 8 L0.5 8 A7.5 7.5 0 0 0 8 15.5 Z" fill="#2eb82e"/><path d="M8 8 L8 15.5 A7.5 7.5 0 0 0 15.5 8 Z" fill="#f5d020"/><circle cx="6" cy="5" r="2" fill="#fff" opacity=".45"/></svg>
<svg style="position:absolute;left:1012px;top:111px;" width="16" height="16" viewBox="0 0 16 16"><circle cx="8" cy="6.5" r="6" fill="#e83838"/><path d="M8 6.5 L8 0.5 A6 6 0 0 0 2 6.5 Z" fill="#3a7be0"/><path d="M8 6.5 L2 6.5 A6 6 0 0 0 8 12.5 Z" fill="#2eb82e"/><path d="M8 6.5 L8 12.5 A6 6 0 0 0 14 6.5 Z" fill="#f5d020"/><path d="M0 16 L3 12 L6 16 L9 12 L12 16 L15 12" stroke="#222" stroke-width="1.2" fill="none"/></svg>
<svg style="position:absolute;left:1036px;top:119px;" width="5" height="3" viewBox="0 0 5 3"><path d="M0 0 H5 L2.5 3 Z" fill="#777"/></svg>
<svg style="position:absolute;left:1049px;top:111px;" width="16" height="16" viewBox="0 0 16 16"><rect x="1.5" y="2.5" width="13" height="10" fill="#e8e8e8" stroke="#555"/><rect x="3" y="4" width="10" height="7" fill="#fff" stroke="#999" stroke-width=".6"/><path d="M4 10 L7 7 L9 9 L12 5" stroke="#777" fill="none"/><path d="M5 15.5 H11 M8 12.5 V15.5" stroke="#555"/><path d="M9 4 L13 0.5 L16 2 L13 5Z" fill="#e6b98a" stroke="#8a6030" stroke-width=".7"/></svg>
<svg style="position:absolute;left:1073px;top:119px;" width="5" height="3" viewBox="0 0 5 3"><path d="M0 0 H5 L2.5 3 Z" fill="#777"/></svg>
<svg style="position:absolute;left:1564px;top:113px;" width="13" height="13" viewBox="0 0 13 13"><rect x="0.6" y="0.6" width="12" height="12" rx="1" fill="#f4f4f6" stroke="#707070" stroke-width="1.2"/><path d="M3 4 V9 L5.5 6.5 Z" fill="#707070"/><rect x="7" y="3.5" width="2.5" height="6" fill="none" stroke="#707070" stroke-width="1"/></svg>
<svg style="position:absolute;left:1587px;top:113px;" width="13" height="13" viewBox="0 0 13 13"><rect x="0.6" y="0.6" width="12" height="12" rx="1" fill="#f4f4f6" stroke="#707070" stroke-width="1.2"/><path d="M10 4 V9 L7.5 6.5 Z" fill="#707070"/><rect x="3.5" y="3.5" width="2.5" height="6" fill="none" stroke="#707070" stroke-width="1"/></svg>
<svg style="position:absolute;left:1610px;top:121px;" width="12" height="5" viewBox="0 0 12 5"><rect x="0.6" y="0.6" width="11" height="4" rx="1" fill="#f4f4f6" stroke="#707070" stroke-width="1.2"/></svg>
<svg style="position:absolute;left:1631px;top:112px;" width="17" height="15" viewBox="0 0 17 15"><rect x="5.6" y="0.6" width="10" height="9" rx="1" fill="#f4f4f6" stroke="#707070" stroke-width="1.2"/><rect x="8" y="3" width="5.2" height="4" fill="none" stroke="#707070" stroke-width=".9"/><rect x="0.6" y="4.6" width="10" height="9" rx="1" fill="#f4f4f6" stroke="#707070" stroke-width="1.2"/><rect x="3" y="7" width="5.2" height="4" fill="none" stroke="#707070" stroke-width=".9"/></svg>
<svg style="position:absolute;left:1656px;top:113px;" width="13" height="13" viewBox="0 0 13 13"><path d="M1.8 1.8 L11.2 11.2 M11.2 1.8 L1.8 11.2" stroke="#707070" stroke-width="3.4" stroke-linecap="round"/><path d="M1.8 1.8 L11.2 11.2 M11.2 1.8 L1.8 11.2" stroke="#f6f6f8" stroke-width="1.3" stroke-linecap="round"/></svg>
<div style="position:absolute;left:1656px;top:165px;width:24px;height:24px;background:linear-gradient(90deg,#c4c6ca,#b2b4b8);border:1px solid #2a2a2a;border-right:none;box-sizing:border-box;"></div>
<svg style="position:absolute;left:1661px;top:169px;" width="16" height="16" viewBox="0 0 16 16"><path d="M1.5 8 L8 2 L14.5 8 V15 H1.5 Z" fill="#ffe066" stroke="#6b5000"/><rect x="6" y="9.5" width="3.5" height="5.5" fill="#d8a300" stroke="#6b5000" stroke-width=".7"/><rect x="11.5" y="1.5" width="2" height="4" fill="#c33"/></svg>
<div style="position:absolute;left:1656px;top:190px;width:24px;height:23px;background:linear-gradient(90deg,#c4c6ca,#b2b4b8);border:1px solid #2a2a2a;border-right:none;box-sizing:border-box;"></div>
<svg style="position:absolute;left:1661px;top:194px;" width="16" height="16" viewBox="0 0 16 16"><rect x="1" y="8" width="4" height="7.5" fill="#2ec42e" stroke="#0b4d0b" stroke-width=".8"/><rect x="5" y="6" width="4" height="9.5" fill="#ffd93a" stroke="#6b5000" stroke-width=".8"/><rect x="9.5" y="2" width="5" height="13.5" fill="#8ab4e8" stroke="#2a4a90" stroke-width=".8"/><circle cx="12" cy="2" r="1.6" fill="#c33"/></svg>
<div style="position:absolute;left:1656px;top:213px;width:24px;height:24px;background:linear-gradient(90deg,#c4c6ca,#b2b4b8);border:1px solid #2a2a2a;border-right:none;box-sizing:border-box;"></div>
<svg style="position:absolute;left:1661px;top:217px;" width="16" height="16" viewBox="0 0 16 16"><path d="M1 3 H6 L7.5 4.5 H14 V14.5 H1 Z" fill="#e9b53c" stroke="#8a6200"/><path d="M1 14.5 L3.5 7 H16 L13.5 14.5 Z" fill="#ffdb70" stroke="#8a6200"/></svg>
<div style="position:absolute;left:1656px;top:237px;width:24px;height:24px;background:linear-gradient(90deg,#c4c6ca,#b2b4b8);border:1px solid #2a2a2a;border-right:none;box-sizing:border-box;"></div>
<svg style="position:absolute;left:1661px;top:241px;" width="16" height="16" viewBox="0 0 16 16"><rect x="3" y="1" width="5.5" height="5" fill="#fff" stroke="#2a4a90" stroke-width=".8"/><rect x="9.5" y="1" width="6" height="5" fill="#fff" stroke="#2a4a90" stroke-width=".8"/><rect x="3" y="7" width="5.5" height="5" fill="#ffe066" stroke="#2a4a90" stroke-width=".8"/><rect x="9.5" y="7" width="6" height="5" fill="#fff" stroke="#2a4a90" stroke-width=".8"/><path d="M1 14 H6 M4 12 L6.5 14 L4 16" stroke="#1a3ac8" stroke-width="1.5" fill="none"/></svg>
<div style="position:absolute;left:1656px;top:261px;width:24px;height:24px;background:#ffffff;border:1px solid #2a2a2a;border-right:none;box-sizing:border-box;"></div>
<svg style="position:absolute;left:1661px;top:265px;" width="16" height="16" viewBox="0 0 16 16"><circle cx="8" cy="8" r="7.5" fill="#e83838"/><path d="M8 8 L8 0.5 A7.5 7.5 0 0 0 0.5 8 Z" fill="#3a7be0"/><path d="M8 8 L0.5 8 A7.5 7.5 0 0 0 8 15.5 Z" fill="#2eb82e"/><path d="M8 8 L8 15.5 A7.5 7.5 0 0 0 15.5 8 Z" fill="#f5d020"/><circle cx="6" cy="5" r="2" fill="#fff" opacity=".45"/></svg>
<div style="position:absolute;left:1656px;top:285px;width:24px;height:24px;background:linear-gradient(90deg,#c4c6ca,#b2b4b8);border:1px solid #2a2a2a;border-right:none;box-sizing:border-box;"></div>
<svg style="position:absolute;left:1661px;top:289px;" width="16" height="16" viewBox="0 0 16 16"><rect x="1.5" y="6" width="12" height="10" fill="#f4f4f4" stroke="#777"/><path d="M3.5 9 H11.5 M3.5 11 H11.5 M3.5 13 H11.5" stroke="#999" stroke-width=".8"/><path d="M4 7 L9 1.5 L16 4 L13 8 Z" fill="#e6b98a" stroke="#8a6030" stroke-width=".8"/></svg>
<div style="position:absolute;left:63px;top:105px;width:58px;height:20px;background:linear-gradient(#c0c2c6,#b3b5b9);border:1px solid #1e1e1e;box-sizing:border-box;box-shadow:inset 1px 1px 0 #e2e3e6;"></div>
<div class="t" style="left:74.00px;top:108.31px;font-size:11.8px;line-height:11.8px;color:#1b1b1b;font-weight:normal;transform:scaleX(0.9673);transform-origin:0 0;">Sketch</div>
<div style="position:absolute;left:120px;top:105px;width:61px;height:20px;background:linear-gradient(#c0c2c6,#b3b5b9);border:1px solid #1e1e1e;box-sizing:border-box;box-shadow:inset 1px 1px 0 #e2e3e6;"></div>
<div class="t" style="left:128.20px;top:108.31px;font-size:11.8px;line-height:11.8px;color:#1b1b1b;font-weight:normal;transform:scaleX(0.9407);transform-origin:0 0;">Surfaces</div>
<div style="position:absolute;left:180px;top:105px;width:79px;height:20px;background:linear-gradient(#c0c2c6,#b3b5b9);border:1px solid #1e1e1e;box-sizing:border-box;box-shadow:inset 1px 1px 0 #e2e3e6;"></div>
<div class="t" style="left:188.00px;top:108.31px;font-size:11.8px;line-height:11.8px;color:#1b1b1b;font-weight:normal;transform:scaleX(0.9799);transform-origin:0 0;">Sheet Metal</div>
<div style="position:absolute;left:258px;top:105px;width:77px;height:20px;background:linear-gradient(#c0c2c6,#b3b5b9);border:1px solid #1e1e1e;box-sizing:border-box;box-shadow:inset 1px 1px 0 #e2e3e6;"></div>
<div class="t" style="left:265.70px;top:108.31px;font-size:11.8px;line-height:11.8px;color:#1b1b1b;font-weight:normal;transform:scaleX(1.0205);transform-origin:0 0;">Weldments</div>
<div style="position:absolute;left:334px;top:105px;width:96px;height:20px;background:linear-gradient(#c0c2c6,#b3b5b9);border:1px solid #1e1e1e;box-sizing:border-box;box-shadow:inset 1px 1px 0 #e2e3e6;"></div>
<div class="t" style="left:342.40px;top:108.31px;font-size:11.8px;line-height:11.8px;color:#1b1b1b;font-weight:normal;transform:scaleX(1.0180);transform-origin:0 0;">Data Migration</div>
<div style="position:absolute;left:429px;top:105px;width:88px;height:20px;background:linear-gradient(#c0c2c6,#b3b5b9);border:1px solid #1e1e1e;box-sizing:border-box;box-shadow:inset 1px 1px 0 #e2e3e6;"></div>
<div class="t" style="left:437.40px;top:108.31px;font-size:11.8px;line-height:11.8px;color:#1b1b1b;font-weight:normal;">Direct Editing</div>
<div style="position:absolute;left:516px;top:105px;width:61px;height:20px;background:linear-gradient(#c0c2c6,#b3b5b9);border:1px solid #1e1e1e;box-sizing:border-box;box-shadow:inset 1px 1px 0 #e2e3e6;"></div>
<div class="t" style="left:524.40px;top:108.31px;font-size:11.8px;line-height:11.8px;color:#1b1b1b;font-weight:normal;transform:scaleX(0.9494);transform-origin:0 0;">Evaluate</div>
<div style="position:absolute;left:576px;top:105px;width:133px;height:20px;background:linear-gradient(#c0c2c6,#b3b5b9);border:1px solid #1e1e1e;box-sizing:border-box;box-shadow:inset 1px 1px 0 #e2e3e6;"></div>
<div class="t" style="left:583.90px;top:108.31px;font-size:11.8px;line-height:11.8px;color:#1b1b1b;font-weight:normal;transform:scaleX(0.9467);transform-origin:0 0;">SOLIDWORKS Add-Ins</div>
<div style="position:absolute;left:0px;top:104px;width:64px;height:23px;background:linear-gradient(#e0e2e6,#e6e8eb);border-right:1px solid #1e1e1e;border-bottom:1px solid #1e1e1e;box-sizing:border-box;"></div>
<div class="t" style="left:8.60px;top:108.48px;font-size:11.6px;line-height:11.6px;color:#1b1b1b;font-weight:bold;transform:scaleX(0.9808);transform-origin:0 0;">Features</div>
<div style="position:absolute;left:0px;top:127px;width:188px;height:849px;background:#e3e5e9;"></div>
<div style="position:absolute;left:0px;top:127px;width:187px;height:2px;background:#e9ebee;"></div>
<div style="position:absolute;left:0px;top:129px;width:187px;height:1px;background:#7c8189;"></div>
<div style="position:absolute;left:0px;top:130px;width:187px;height:4px;background:#d9dce1;"></div>
<div style="position:absolute;left:0px;top:134px;width:187px;height:1px;background:#161616;"></div>
<div style="position:absolute;left:187px;top:126px;width:2px;height:850px;background:#161616;"></div>
<div style="position:absolute;left:0px;top:122px;width:1px;height:33px;background:#161616;"></div>
<div style="position:absolute;left:1px;top:135px;width:26px;height:20px;background:linear-gradient(#e8eaed,#e0e2e6);"></div>
<div style="position:absolute;left:29px;top:135px;width:26px;height:20px;background:linear-gradient(#bcbec2,#aeb0b4);box-shadow:inset 1px 1px 0 #d4d6d9;"></div>
<div style="position:absolute;left:57px;top:135px;width:26px;height:20px;background:linear-gradient(#bcbec2,#aeb0b4);box-shadow:inset 1px 1px 0 #d4d6d9;"></div>
<div style="position:absolute;left:85px;top:135px;width:26px;height:20px;background:linear-gradient(#bcbec2,#aeb0b4);box-shadow:inset 1px 1px 0 #d4d6d9;"></div>
<div style="position:absolute;left:113px;top:135px;width:26px;height:20px;background:linear-gradient(#bcbec2,#aeb0b4);box-shadow:inset 1px 1px 0 #d4d6d9;"></div>
<div style="position:absolute;left:27px;top:135px;width:2px;height:20px;background:#161616;"></div>
<div style="position:absolute;left:55px;top:135px;width:2px;height:20px;background:#161616;"></div>
<div style="position:absolute;left:83px;top:135px;width:2px;height:20px;background:#161616;"></div>
<div style="position:absolute;left:111px;top:135px;width:2px;height:20px;background:#161616;"></div>
<div style="position:absolute;left:139px;top:135px;width:2px;height:20px;background:#161616;"></div>
<div style="position:absolute;left:0px;top:155px;width:187px;height:1px;background:#222;"></div>
<svg style="position:absolute;left:5px;top:137px;" width="16" height="16" viewBox="0 0 16 16"><g stroke="#111" stroke-width="1.1" stroke-linejoin="round"><path d="M0.8 7.5 L4.2 5.5 L15.3 11.6 L11.9 13.6 Z" fill="#ffe866"/><path d="M0.8 7.5 L11.9 13.6 V16 L0.8 9.9 Z" fill="#f2c500"/><path d="M11.9 13.6 L15.3 11.6 V14 L11.9 16 Z" fill="#c99a00"/><path d="M1.2 3.2 L4.6 1.2 L8.6 3.4 L5.2 5.4 Z" fill="#ffe866"/><path d="M1.2 3.2 L5.2 5.4 V9.6 L1.2 7.4 Z" fill="#f2c500"/><path d="M5.2 5.4 L8.6 3.4 V7.6 L5.2 9.6 Z" fill="#c99a00"/></g></svg>
<svg style="position:absolute;left:33px;top:137px;" width="16" height="16" viewBox="0 0 16 16"><rect x="1.5" y="6" width="12" height="10" fill="#f0f2f6" stroke="#5a6b80"/><rect x="3" y="8" width="2.5" height="2.5" fill="#ffd93a" stroke="#6b5000" stroke-width=".6"/><rect x="3" y="12" width="2.5" height="2.5" fill="none" stroke="#5a6b80" stroke-width=".6"/><path d="M7 9 H12 M7 13 H12" stroke="#5a6b80"/><path d="M4 7 L9 1.5 L16 4 L13 8 Z" fill="#e6b98a" stroke="#8a6030" stroke-width=".8"/></svg>
<svg style="position:absolute;left:61px;top:137px;" width="16" height="16" viewBox="0 0 16 16"><path d="M2 1 V15 M2 4 H6 M2 12 H7" stroke="#555" stroke-width="1"/><rect x="6" y="1" width="5" height="5" rx="1" fill="#ffd93a" stroke="#6b5000"/><rect x="9" y="9" width="6" height="6" rx="1" fill="#ffd93a" stroke="#6b5000"/><path d="M8.5 6 V12 H9" stroke="#6b5000" fill="none"/></svg>
<svg style="position:absolute;left:89px;top:137px;" width="16" height="16" viewBox="0 0 16 16"><circle cx="8" cy="8" r="5" fill="none" stroke="#c050e8" stroke-width="1.6"/><path d="M8 0.5 V15.5 M0.5 8 H15.5" stroke="#c050e8" stroke-width="1.6"/></svg>
<svg style="position:absolute;left:118px;top:137px;" width="16" height="16" viewBox="0 0 16 16"><circle cx="8" cy="8" r="7.5" fill="#f5d020"/><path d="M8 8 L8 0.5 A7.5 7.5 0 0 0 0.5 8 Z" fill="#3a7be0"/><path d="M8 8 L0.5 8 A7.5 7.5 0 0 0 4 14.4 Z" fill="#2eb82e"/><path d="M8 8 L8 0.5 A7.5 7.5 0 0 1 15.5 8 Z" fill="#e83838"/><circle cx="12" cy="5" r="2.8" fill="#111"/></svg>
<svg style="position:absolute;left:173px;top:141px;" width="11" height="8" viewBox="0 0 11 8"><path d="M1 0.5 L4.5 4 L1 7.5 M5.5 0.5 L9 4 L5.5 7.5" fill="none" stroke="#111" stroke-width="1.5"/></svg>
<div style="position:absolute;left:1px;top:157px;width:186px;height:18px;background:#ebebec;border:1px solid #6a6a6a;box-sizing:border-box;"></div>
<svg style="position:absolute;left:8px;top:160px;" width="13" height="13" viewBox="0 0 13 13"><path d="M1 1 H12 V3 L8 6.5 V12 H5 V6.5 L1 3 Z" fill="#5aa0f0" stroke="#1a4aa8"/><path d="M1.5 1.5 H11.5" stroke="#bde" /></svg>
<svg style="position:absolute;left:2px;top:180px;" width="16" height="16" viewBox="0 0 16 16"><g stroke="#111" stroke-width="1.1" stroke-linejoin="round"><path d="M0.8 7.5 L4.2 5.5 L15.3 11.6 L11.9 13.6 Z" fill="#ffe866"/><path d="M0.8 7.5 L11.9 13.6 V16 L0.8 9.9 Z" fill="#f2c500"/><path d="M11.9 13.6 L15.3 11.6 V14 L11.9 16 Z" fill="#c99a00"/><path d="M1.2 3.2 L4.6 1.2 L8.6 3.4 L5.2 5.4 Z" fill="#ffe866"/><path d="M1.2 3.2 L5.2 5.4 V9.6 L1.2 7.4 Z" fill="#f2c500"/><path d="M5.2 5.4 L8.6 3.4 V7.6 L5.2 9.6 Z" fill="#c99a00"/></g></svg>
<div class="t" style="left:23.30px;top:182.73px;font-size:11.9px;line-height:11.9px;color:#161616;font-weight:normal;transform:scaleX(0.9655);transform-origin:0 0;">Part1^Assem1</div>
<div style="position:absolute;left:0;top:0;width:187.0px;height:1010px;overflow:hidden"><div class="t" style="left:105.30px;top:182.73px;font-size:11.9px;line-height:11.9px;color:#161616;font-weight:normal;transform:scaleX(1.0608);transform-origin:0 0;">(Default&lt;As Maximum)&gt;</div></div>
<div style="position:absolute;left:189px;top:178px;width:40px;height:20px;background:transparent;"></div>
<div style="position:absolute;left:0px;top:195.5px;width:188px;height:2.2px;background:#cf9f22;"></div>
<svg style="position:absolute;left:0px;top:197px;" width="30" height="250" viewBox="0 0 30 250"><path d="M10.5 0 V243" stroke="#8a8a8a" stroke-dasharray="1 1"/><path d="M11 9.5 H21" stroke="#8a8a8a" stroke-dasharray="1 1"/><path d="M11 27.5 H21" stroke="#8a8a8a" stroke-dasharray="1 1"/><path d="M11 45.5 H21" stroke="#8a8a8a" stroke-dasharray="1 1"/><path d="M11 63.5 H21" stroke="#8a8a8a" stroke-dasharray="1 1"/><path d="M11 81.5 H21" stroke="#8a8a8a" stroke-dasharray="1 1"/><path d="M11 99.5 H21" stroke="#8a8a8a" stroke-dasharray="1 1"/><path d="M11 117.5 H21" stroke="#8a8a8a" stroke-dasharray="1 1"/><path d="M11 135.5 H21" stroke="#8a8a8a" stroke-dasharray="1 1"/><path d="M11 153.5 H21" stroke="#8a8a8a" stroke-dasharray="1 1"/><path d="M11 171.5 H21" stroke="#8a8a8a" stroke-dasharray="1 1"/><path d="M11 189.5 H21" stroke="#8a8a8a" stroke-dasharray="1 1"/><path d="M11 207.5 H21" stroke="#8a8a8a" stroke-dasharray="1 1"/><path d="M11 225.5 H21" stroke="#8a8a8a" stroke-dasharray="1 1"/><path d="M11 243.5 H21" stroke="#8a8a8a" stroke-dasharray="1 1"/></svg>
<div style="position:absolute;left:20px;top:198px;width:18px;height:16px;background:#e3e5e9;"></div>
<svg style="position:absolute;left:21px;top:198px;" width="16" height="16" viewBox="0 0 16 16"><path d="M1.5 2.5 Q1.5 1.5 2.5 1.5 H6.5 L8 3.5 H14.5 Q15.5 3.5 15.5 4.5 V14 Q15.5 15 14.5 15 H2.5 Q1.5 15 1.5 14 Z" fill="#ffd84a" stroke="#8a6200"/><path d="M2.5 5 H14.5" stroke="#fff6c0" stroke-width="1"/><circle cx="8.5" cy="9.5" r="4" fill="#fff" stroke="#3a3a9a" stroke-width="1.2"/><path d="M8.5 7 V9.5 H10.5" stroke="#c33" stroke-width="1" fill="none"/><path d="M3 3 Q6 0 10 1.5" stroke="#1a9a1a" stroke-width="1.3" fill="none"/></svg>
<div style="position:absolute;left:5px;top:202px;width:11px;height:11px;background:#e3e5e9;"></div>
<svg style="position:absolute;left:6px;top:203px;" width="9" height="9" viewBox="0 0 9 9"><rect x="0.5" y="0.5" width="8" height="8" fill="#fff" stroke="#8a9aaa"/><path d="M2.5 4.5 H6.5 M4.5 2.5 V6.5" stroke="#1a2a6a" stroke-width="1"/></svg>
<div class="t" style="left:41.80px;top:201.03px;font-size:11.9px;line-height:11.9px;color:#161616;font-weight:normal;transform:scaleX(1.0270);transform-origin:0 0;">History</div>
<div style="position:absolute;left:20px;top:216px;width:18px;height:16px;background:#e3e5e9;"></div>
<svg style="position:absolute;left:21px;top:216px;" width="16" height="16" viewBox="0 0 16 16"><path d="M1.5 2.5 Q1.5 1.5 2.5 1.5 H6.5 L8 3.5 H14.5 Q15.5 3.5 15.5 4.5 V14 Q15.5 15 14.5 15 H2.5 Q1.5 15 1.5 14 Z" fill="#ffd84a" stroke="#8a6200"/><path d="M2.5 5 H14.5" stroke="#fff6c0" stroke-width="1"/><circle cx="8.5" cy="9.5" r="4" fill="#fff" stroke="#3a3a5a" stroke-width="1"/><path d="M6.5 11.5 L10.5 7.5" stroke="#3a6ad0" stroke-width="1.3"/></svg>
<div class="t" style="left:41.80px;top:219.03px;font-size:11.9px;line-height:11.9px;color:#161616;font-weight:normal;transform:scaleX(0.9146);transform-origin:0 0;">Sensors</div>
<div style="position:absolute;left:20px;top:234px;width:18px;height:16px;background:#e3e5e9;"></div>
<svg style="position:absolute;left:21px;top:234px;" width="16" height="16" viewBox="0 0 16 16"><path d="M1.5 2.5 Q1.5 1.5 2.5 1.5 H6.5 L8 3.5 H14.5 Q15.5 3.5 15.5 4.5 V14 Q15.5 15 14.5 15 H2.5 Q1.5 15 1.5 14 Z" fill="#ffd84a" stroke="#8a6200"/><path d="M2.5 5 H14.5" stroke="#fff6c0" stroke-width="1"/><path d="M5.5 13 L8.5 5.5 L11.5 13 M6.5 10.5 H10.5" stroke="#2a3aa8" stroke-width="1.6" fill="none"/></svg>
<div style="position:absolute;left:5px;top:238px;width:11px;height:11px;background:#e3e5e9;"></div>
<svg style="position:absolute;left:6px;top:239px;" width="9" height="9" viewBox="0 0 9 9"><rect x="0.5" y="0.5" width="8" height="8" fill="#fff" stroke="#8a9aaa"/><path d="M2.5 4.5 H6.5 M4.5 2.5 V6.5" stroke="#1a2a6a" stroke-width="1"/></svg>
<div class="t" style="left:41.80px;top:237.03px;font-size:11.9px;line-height:11.9px;color:#161616;font-weight:normal;transform:scaleX(1.0348);transform-origin:0 0;">Annotations</div>
<div style="position:absolute;left:20px;top:252px;width:18px;height:16px;background:#e3e5e9;"></div>
<svg style="position:absolute;left:21px;top:252px;" width="16" height="16" viewBox="0 0 16 16"><path d="M1.5 2.5 Q1.5 1.5 2.5 1.5 H6.5 L8 3.5 H14.5 Q15.5 3.5 15.5 4.5 V14 Q15.5 15 14.5 15 H2.5 Q1.5 15 1.5 14 Z" fill="#ffd84a" stroke="#8a6200"/><path d="M2.5 5 H14.5" stroke="#fff6c0" stroke-width="1"/><path d="M4 9.5 L8 6.5 V8.5 H12.5 V10.5 H8 V12.5 Z" fill="#f09020" stroke="#6b3a00" stroke-width=".8"/></svg>
<div class="t" style="left:41.80px;top:255.03px;font-size:11.9px;line-height:11.9px;color:#161616;font-weight:normal;transform:scaleX(0.9499);transform-origin:0 0;">Surface Bodies</div>
<div style="position:absolute;left:20px;top:270px;width:18px;height:16px;background:#e3e5e9;"></div>
<svg style="position:absolute;left:21px;top:270px;" width="16" height="16" viewBox="0 0 16 16"><rect x="1" y="1" width="10" height="9" fill="#fff" stroke="#4a5a70"/><path d="M1 4 H11 M1 7 H11 M4.5 1 V10 M8 1 V10" stroke="#4a5a70" stroke-width=".8"/><path d="M6 8 V14 H15 Z" fill="#2ec42e" stroke="#0b4d0b" stroke-width=".8"/><rect x="5" y="13.5" width="10.5" height="2" fill="#ffd93a" stroke="#111" stroke-width=".8"/><rect x="6" y="8" width="2" height="6" fill="#ffd93a" stroke="#111" stroke-width=".6"/></svg>
<div style="position:absolute;left:5px;top:274px;width:11px;height:11px;background:#e3e5e9;"></div>
<svg style="position:absolute;left:6px;top:275px;" width="9" height="9" viewBox="0 0 9 9"><rect x="0.5" y="0.5" width="8" height="8" fill="#fff" stroke="#8a9aaa"/><path d="M2.5 4.5 H6.5 M4.5 2.5 V6.5" stroke="#1a2a6a" stroke-width="1"/></svg>
<div class="t" style="left:41.80px;top:273.03px;font-size:11.9px;line-height:11.9px;color:#161616;font-weight:normal;transform:scaleX(0.9946);transform-origin:0 0;">Cut list(3)</div>
<div style="position:absolute;left:20px;top:288px;width:18px;height:16px;background:#e3e5e9;"></div>
<svg style="position:absolute;left:21px;top:288px;" width="16" height="16" viewBox="0 0 16 16"><path d="M1.5 2.5 Q1.5 1.5 2.5 1.5 H6.5 L8 3.5 H14.5 Q15.5 3.5 15.5 4.5 V14 Q15.5 15 14.5 15 H2.5 Q1.5 15 1.5 14 Z" fill="#ffd84a" stroke="#8a6200"/><path d="M2.5 5 H14.5" stroke="#fff6c0" stroke-width="1"/><path d="M11 6 H6 L9 9.5 L6 13 H11" stroke="#2a3aa8" stroke-width="1.4" fill="none"/></svg>
<div class="t" style="left:41.80px;top:291.03px;font-size:11.9px;line-height:11.9px;color:#161616;font-weight:normal;transform:scaleX(0.9869);transform-origin:0 0;">Equations</div>
<div style="position:absolute;left:20px;top:306px;width:18px;height:16px;background:#e3e5e9;"></div>
<svg style="position:absolute;left:21px;top:306px;" width="16" height="16" viewBox="0 0 16 16"><circle cx="3.5" cy="3.5" r="2.5" fill="#e03030"/><circle cx="3.5" cy="8.5" r="2.5" fill="#3050e0"/><circle cx="3.5" cy="13.5" r="2.5" fill="#2eb82e"/><path d="M7 3 H15 M7 8.5 H15 M7 14 H15" stroke="#333" stroke-width="1.6"/></svg>
<div class="t" style="left:41.80px;top:309.03px;font-size:11.9px;line-height:11.9px;color:#161616;font-weight:normal;transform:scaleX(1.0178);transform-origin:0 0;">Material &lt;not specified&gt;</div>
<div style="position:absolute;left:20px;top:324px;width:18px;height:16px;background:#e3e5e9;"></div>
<svg style="position:absolute;left:21px;top:324px;" width="16" height="16" viewBox="0 0 16 16"><path d="M8.5 2 L15 8.5 L8.5 15 L2 8.5 Z" fill="none" stroke="#0a0a0a" stroke-width="1.25"/><path d="M0.5 0.5 L4.5 4.5 M12.5 12.5 L16 16 M6.5 7 L10 10.5" stroke="#0a0a0a" stroke-width="1.1"/></svg>
<div class="t" style="left:41.80px;top:327.03px;font-size:11.9px;line-height:11.9px;color:#161616;font-weight:normal;transform:scaleX(0.9842);transform-origin:0 0;">Front Plane</div>
<div style="position:absolute;left:20px;top:342px;width:18px;height:16px;background:#e3e5e9;"></div>
<svg style="position:absolute;left:21px;top:342px;" width="16" height="16" viewBox="0 0 16 16"><path d="M8.5 2 L15 8.5 L8.5 15 L2 8.5 Z" fill="none" stroke="#0a0a0a" stroke-width="1.25"/><path d="M0.5 0.5 L4.5 4.5 M12.5 12.5 L16 16 M6.5 7 L10 10.5" stroke="#0a0a0a" stroke-width="1.1"/></svg>
<div class="t" style="left:41.80px;top:345.03px;font-size:11.9px;line-height:11.9px;color:#161616;font-weight:normal;transform:scaleX(1.0096);transform-origin:0 0;">Top Plane</div>
<div style="position:absolute;left:20px;top:360px;width:18px;height:16px;background:#e3e5e9;"></div>
<svg style="position:absolute;left:21px;top:360px;" width="16" height="16" viewBox="0 0 16 16"><path d="M8.5 2 L15 8.5 L8.5 15 L2 8.5 Z" fill="none" stroke="#0a0a0a" stroke-width="1.25"/><path d="M0.5 0.5 L4.5 4.5 M12.5 12.5 L16 16 M6.5 7 L10 10.5" stroke="#0a0a0a" stroke-width="1.1"/></svg>
<div class="t" style="left:41.80px;top:363.03px;font-size:11.9px;line-height:11.9px;color:#161616;font-weight:normal;transform:scaleX(0.9840);transform-origin:0 0;">Right Plane</div>
<div style="position:absolute;left:20px;top:378px;width:18px;height:16px;background:#e3e5e9;"></div>
<svg style="position:absolute;left:21px;top:378px;" width="16" height="16" viewBox="0 0 16 16"><path d="M4 14 V2 M2 4 L4 1.5 L6 4" stroke="#a01818" stroke-width="1" fill="none"/><path d="M4 13 H14 M12 11 L14.5 13 L12 15" stroke="#a01818" stroke-width="1" fill="none"/><path d="M2.5 11.5 L5.5 14.5 M5.5 11.5 L2.5 14.5" stroke="#111" stroke-width="1"/></svg>
<div class="t" style="left:41.80px;top:381.03px;font-size:11.9px;line-height:11.9px;color:#161616;font-weight:normal;transform:scaleX(1.0278);transform-origin:0 0;">Origin</div>
<div style="position:absolute;left:20px;top:396px;width:18px;height:16px;background:#e3e5e9;"></div>
<svg style="position:absolute;left:21px;top:396px;" width="16" height="16" viewBox="0 0 16 16"><path d="M3 1.5 V13 H14.5 Z" fill="none"/><rect x="2" y="1" width="3" height="13" fill="#ffd93a" stroke="#111" stroke-width=".9"/><rect x="1" y="12.5" width="14.5" height="3" fill="#ffd93a" stroke="#111" stroke-width=".9"/><path d="M5 12.5 V7 Q10 8 12.5 12.5 Z" fill="#2ec42e" stroke="#0b4d0b" stroke-width=".7"/><path d="M9 6 L15 1 M8 3 L12 9 M6 6 L14 6" stroke="#f0a030" stroke-width="1"/></svg>
<div class="t" style="left:41.80px;top:399.03px;font-size:11.9px;line-height:11.9px;color:#161616;font-weight:normal;transform:scaleX(1.0317);transform-origin:0 0;">Weldment</div>
<div style="position:absolute;left:20px;top:414px;width:18px;height:16px;background:#e3e5e9;"></div>
<svg style="position:absolute;left:21px;top:414px;" width="16" height="16" viewBox="0 0 16 16"><path d="M1.5 2.5 H11.5 L14.5 5.5 H4.5 Z" fill="#ffe066" stroke="#111" stroke-width="1" stroke-linejoin="round"/><path d="M1.5 2.5 L4.5 5.5 V15.5 L1.5 12.5 Z" fill="#139913" stroke="#111" stroke-width="1" stroke-linejoin="round"/><rect x="4.5" y="5.5" width="10" height="10" fill="#2ec42e" stroke="#111" stroke-width="1"/><path d="M4 5 H13 V8 H10 V10 H7 V8 H4 Z" fill="#ffd93a" stroke="#111" stroke-width=".8"/></svg>
<div style="position:absolute;left:5px;top:418px;width:11px;height:11px;background:#e3e5e9;"></div>
<svg style="position:absolute;left:6px;top:419px;" width="9" height="9" viewBox="0 0 9 9"><rect x="0.5" y="0.5" width="8" height="8" fill="#fff" stroke="#8a9aaa"/><path d="M2.5 4.5 H6.5 M4.5 2.5 V6.5" stroke="#1a2a6a" stroke-width="1"/></svg>
<div class="t" style="left:41.80px;top:417.03px;font-size:11.9px;line-height:11.9px;color:#161616;font-weight:normal;transform:scaleX(0.9662);transform-origin:0 0;">Join1 -&gt;</div>
<div style="position:absolute;left:20px;top:432px;width:18px;height:16px;background:#e3e5e9;"></div>
<svg style="position:absolute;left:21px;top:432px;" width="16" height="16" viewBox="0 0 16 16"><rect x="2" y="1" width="3" height="13" fill="#ffd93a" stroke="#111" stroke-width=".9"/><rect x="1" y="12.5" width="14.5" height="3" fill="#ffd93a" stroke="#111" stroke-width=".9"/><path d="M5 12.5 V6 Q11 7 13 12.5 Z" fill="#2ec42e" stroke="#0b4d0b" stroke-width=".7"/></svg>
<div class="t" style="left:41.80px;top:435.03px;font-size:11.9px;line-height:11.9px;color:#161616;font-weight:normal;transform:scaleX(0.9427);transform-origin:0 0;">Fillet Bead1</div>
<div style="position:absolute;left:0px;top:447px;width:188px;height:1px;background:#7fb0f0;"></div>
<div style="position:absolute;left:0px;top:448px;width:188px;height:2px;background:#3268b0;"></div>
<div style="position:absolute;left:0px;top:955px;width:187px;height:20px;background:#eeeff1;"></div>
<div style="position:absolute;left:0px;top:955px;width:187px;height:1px;background:#e0e2e6;"></div>
<svg style="position:absolute;left:4px;top:960px;" width="6" height="9" viewBox="0 0 6 9"><path d="M5 0.5 L1 4.5 L5 8.5 Z" fill="#555"/></svg>
<svg style="position:absolute;left:178px;top:960px;" width="6" height="9" viewBox="0 0 6 9"><path d="M1 0.5 L5 4.5 L1 8.5 Z" fill="#555"/></svg>
<div style="position:absolute;left:17px;top:957px;width:71px;height:14px;background:linear-gradient(#fafafa,#e4e4e4 60%,#d4d4d4);border:1px solid #a8a8a8;border-radius:2px;box-sizing:border-box;"></div>
<svg style="position:absolute;left:49px;top:960px;" width="8" height="8" viewBox="0 0 8 8"><path d="M1.5 0 V8 M4 0 V8 M6.5 0 V8" stroke="#555" stroke-width="1"/></svg>
<div style="position:absolute;left:0px;top:974px;width:187px;height:2px;background:#b4b8be;"></div>
<div style="position:absolute;left:187px;top:521px;width:10px;height:39px;background:#e6e7ea;border:2px solid #161616;border-left:none;box-sizing:border-box;"></div>
<svg style="position:absolute;left:190.5px;top:529px;" width="4" height="23" viewBox="0 0 4 23"><path d="M3.5 0 L0.3 2.5 L3.5 5 Z M3.5 9 L0.3 11.5 L3.5 14 Z M3.5 18 L0.3 20.5 L3.5 23 Z" fill="#333"/></svg>
<svg style="position:absolute;left:0px;top:0px;" width="1" height="1" viewBox="0 0 1 1">
<path d="M231.2 917 V900" stroke="#1a7a1a" stroke-width="3.6"/><path d="M226 901.5 L231.2 893 L236.4 901.5 Z" fill="#3aa84a"/>
<path d="M231.2 917 L249 922.5" stroke="#c42828" stroke-width="3.6"/><path d="M247 918 L258 925 L247.5 928 Z" fill="#e04848"/>
<path d="M231.2 917 L222 926" stroke="#1a2aa0" stroke-width="3.6"/><path d="M217.5 925 L223 923.5 L225.5 929 L220.5 932 L217 930 Z" fill="#1a2ad0"/>
<path d="M227.5 882 L230.8 886 L234.2 882 M230.8 886 V890" stroke="#1a8a2a" stroke-width="1" fill="none"/>
<path d="M258.5 921.5 L263 929.5 M263 921.5 L258.5 929.5" stroke="#d02020" stroke-width="1"/>
<path d="M212 929.5 H217 M214.5 929.5 L213.5 937.5 M212 937.5 H217" stroke="#1a2ab0" stroke-width="1" fill="none"/>
</svg>
<div class="t" style="left:201.70px;top:961.45px;font-size:11.4px;line-height:11.4px;color:#0e0e0e;font-weight:bold;transform:scaleX(1.1624);transform-origin:0 0;">*Trimetric</div>
<div style="position:absolute;left:0px;top:977px;width:1680px;height:14px;background:#e3e6e9;"></div>
<div style="position:absolute;left:0px;top:977px;width:2px;height:14px;background:#7aa0a0;"></div>
<div style="position:absolute;left:27.0px;top:977px;width:16px;height:14px;background:linear-gradient(#bcbec2,#a9abaf);border-right:1px solid #d0d2d5;box-sizing:border-box;"></div>
<div style="position:absolute;left:43.5px;top:977px;width:16px;height:14px;background:linear-gradient(#bcbec2,#a9abaf);border-right:1px solid #d0d2d5;box-sizing:border-box;"></div>
<div style="position:absolute;left:60.0px;top:977px;width:16px;height:14px;background:linear-gradient(#bcbec2,#a9abaf);border-right:1px solid #d0d2d5;box-sizing:border-box;"></div>
<div style="position:absolute;left:76.5px;top:977px;width:16px;height:14px;background:linear-gradient(#bcbec2,#a9abaf);border-right:1px solid #d0d2d5;box-sizing:border-box;"></div>
<svg style="position:absolute;left:32px;top:980px;" width="72" height="8" viewBox="0 0 72 8"><path d="M1 0 V7 M6 0 L2 3.5 L6 7Z M19 0 L15 3.5 L19 7 Z M32 0 L36 3.5 L32 7 Z M48 0 L52 3.5 L48 7 Z M53 0 V7" stroke="#8a8c90" fill="#8a8c90" stroke-width="1"/></svg>
<div style="position:absolute;left:93px;top:976px;width:57px;height:16px;background:#e6e8eb;border:1px solid #1e1e1e;border-top:none;box-sizing:border-box;"></div>
<div style="position:absolute;left:149px;top:977px;width:105px;height:14px;background:linear-gradient(#b4b6ba,#a4a6aa);border:1px solid #2a2a2a;box-sizing:border-box;"></div>
<div class="t" style="left:104.50px;top:977.38px;font-size:11.6px;line-height:11.6px;color:#1b1b1b;font-weight:bold;transform:scaleX(1.0149);transform-origin:0 0;">Model</div>
<div class="t" style="left:158.30px;top:977.38px;font-size:11.6px;line-height:11.6px;color:#1b1b1b;font-weight:normal;transform:scaleX(1.0292);transform-origin:0 0;">Motion Study 1</div>
<div style="position:absolute;left:0px;top:991px;width:1680px;height:1px;background:#101010;"></div>
<div style="position:absolute;left:0px;top:992px;width:1680px;height:1px;background:#f2f3f6;"></div>
<div style="position:absolute;left:0px;top:993px;width:1680px;height:17px;background:#d8dbe0;"></div>
<div class="t" style="left:2.40px;top:996.91px;font-size:11.8px;line-height:11.8px;color:#1b1b1b;font-weight:normal;transform:scaleX(0.9458);transform-origin:0 0;">SOLIDWORKS Premium 2015 x64 Edition</div>
<div class="t" style="left:1396.40px;top:997.13px;font-size:11.9px;line-height:11.9px;color:#1b1b1b;font-weight:normal;transform:scaleX(0.9826);transform-origin:0 0;">Editing Part</div>
<div class="t" style="left:1510.40px;top:997.13px;font-size:11.9px;line-height:11.9px;color:#1b1b1b;font-weight:normal;transform:scaleX(0.9622);transform-origin:0 0;">MMGS</div>
<svg style="position:absolute;left:1565px;top:999px;" width="6" height="4" viewBox="0 0 6 4"><path d="M0 4 L3 0 L6 4Z" fill="#222"/></svg>
<svg style="position:absolute;left:1587px;top:995px;" width="14" height="13" viewBox="0 0 14 13"><rect x="0.5" y="0.5" width="13" height="12" fill="#fff" stroke="#3a5a90"/><path d="M4.5 4 Q4.5 2 7 2 Q9.5 2 9.5 4 Q9.5 5.5 7 6.5 V8" fill="none" stroke="#1a9a1a" stroke-width="1.8"/><circle cx="7" cy="10.5" r="1" fill="#1a9a1a"/></svg>
<svg style="position:absolute;left:1659px;top:993px;" width="15" height="15" viewBox="0 0 15 15"><path d="M1 8 L8 1 H14 V7 L7 14 Z" fill="#f0d040" stroke="#7a5a00"/><circle cx="11" cy="4" r="1.5" fill="#fff" stroke="#7a5a00" stroke-width=".8"/></svg>
<svg style="left:0;top:0" width="1680" height="1010" viewBox="0 0 1680 1010">
<defs>
<clipPath id="wc"><polygon points="681.7,390.7 692.4,359.5 1132.6,478.7 1121,510"/></clipPath>
<linearGradient id="wg" gradientUnits="userSpaceOnUse" x1="692.4" y1="359.5" x2="683.8" y2="391.3"><stop offset="0" stop-color="#14141c" stop-opacity="0.5"/><stop offset="0.28" stop-color="#14141c" stop-opacity="0"/><stop offset="0.72" stop-color="#14141c" stop-opacity="0"/><stop offset="1" stop-color="#14141c" stop-opacity="0.35"/></linearGradient>
<filter id="bl" x="-5%" y="-20%" width="110%" height="140%"><feGaussianBlur stdDeviation="1.9"/></filter>
</defs>
<polygon points="542.5,246 1284,447 1284,871 542.5,670" fill="#50525e"/>
<polygon points="542.5,246 561,228 1302.5,429.5 1284,447" fill="#b8bbce"/>
<polygon points="1284,447 1302.5,429.5 1302.5,853 1284,871" fill="#7c7f92"/>
<polygon points="674.5,397.5 1114.2,517.5 1114.3,755 674.1,636.5" fill="#50525e"/>
<polygon points="1114.2,517.5 1132.6,500.9 1133.1,737.3 1114.3,755" fill="#7e8194"/>
<polygon points="674.5,397.5 681.7,390.7 1121,510 1114.2,517.5" fill="#bcbfd2"/>
<polygon points="681.7,390.7 692.4,359.5 1132.6,478.7 1121,510" fill="#62656f"/>
<g clip-path="url(#wc)"><g filter="url(#bl)"><path d="M692.4 359.5 Q701.5 379.0 681.7 390.7" stroke="#33353e" stroke-width="4.2" fill="none"/><path d="M702.1 362.1 Q709.2 381.1 691.4 393.3" stroke="#9699a9" stroke-width="4.5" fill="none"/><path d="M712.7 365.0 Q721.8 384.5 702.0 396.2" stroke="#33353e" stroke-width="4.2" fill="none"/><path d="M722.3 367.6 Q729.5 386.6 711.6 398.8" stroke="#9699a9" stroke-width="4.5" fill="none"/><path d="M732.9 370.5 Q742.1 390.0 722.2 401.7" stroke="#33353e" stroke-width="4.2" fill="none"/><path d="M742.6 373.1 Q749.8 392.1 731.9 404.3" stroke="#9699a9" stroke-width="4.5" fill="none"/><path d="M753.2 376.0 Q762.3 395.5 742.5 407.2" stroke="#33353e" stroke-width="4.2" fill="none"/><path d="M762.9 378.6 Q770.1 397.6 752.2 409.8" stroke="#9699a9" stroke-width="4.5" fill="none"/><path d="M773.5 381.5 Q782.6 401.0 762.8 412.7" stroke="#33353e" stroke-width="4.2" fill="none"/><path d="M783.1 384.1 Q790.3 403.1 772.4 415.3" stroke="#9699a9" stroke-width="4.5" fill="none"/><path d="M793.7 386.9 Q802.9 406.5 783.0 418.1" stroke="#33353e" stroke-width="4.2" fill="none"/><path d="M803.4 389.6 Q810.6 408.6 792.7 420.8" stroke="#9699a9" stroke-width="4.5" fill="none"/><path d="M814.0 392.4 Q823.1 412.0 803.3 423.6" stroke="#33353e" stroke-width="4.2" fill="none"/><path d="M823.7 395.1 Q830.9 414.0 813.0 426.3" stroke="#9699a9" stroke-width="4.5" fill="none"/><path d="M834.3 397.9 Q843.4 417.4 823.6 429.1" stroke="#33353e" stroke-width="4.2" fill="none"/><path d="M843.9 400.5 Q851.1 419.5 833.2 431.7" stroke="#9699a9" stroke-width="4.5" fill="none"/><path d="M854.6 403.4 Q863.7 422.9 843.9 434.6" stroke="#33353e" stroke-width="4.2" fill="none"/><path d="M864.2 406.0 Q871.4 425.0 853.5 437.2" stroke="#9699a9" stroke-width="4.5" fill="none"/><path d="M874.8 408.9 Q884.0 428.4 864.1 440.1" stroke="#33353e" stroke-width="4.2" fill="none"/><path d="M884.5 411.5 Q891.7 430.5 873.8 442.7" stroke="#9699a9" stroke-width="4.5" fill="none"/><path d="M895.1 414.4 Q904.2 433.9 884.4 445.6" stroke="#33353e" stroke-width="4.2" fill="none"/><path d="M904.7 417.0 Q911.9 436.0 894.0 448.2" stroke="#9699a9" stroke-width="4.5" fill="none"/><path d="M915.4 419.9 Q924.5 439.4 904.7 451.1" stroke="#33353e" stroke-width="4.2" fill="none"/><path d="M925.0 422.5 Q932.2 441.5 914.3 453.7" stroke="#9699a9" stroke-width="4.5" fill="none"/><path d="M935.6 425.4 Q944.8 444.9 924.9 456.6" stroke="#33353e" stroke-width="4.2" fill="none"/><path d="M945.3 428.0 Q952.5 447.0 934.6 459.2" stroke="#9699a9" stroke-width="4.5" fill="none"/><path d="M955.9 430.9 Q965.0 450.4 945.2 462.1" stroke="#33353e" stroke-width="4.2" fill="none"/><path d="M965.6 433.5 Q972.7 452.5 954.9 464.7" stroke="#9699a9" stroke-width="4.5" fill="none"/><path d="M976.2 436.4 Q985.3 455.9 965.5 467.6" stroke="#33353e" stroke-width="4.2" fill="none"/><path d="M985.8 439.0 Q993.0 458.0 975.1 470.2" stroke="#9699a9" stroke-width="4.5" fill="none"/><path d="M996.4 441.8 Q1005.6 461.4 985.7 473.0" stroke="#33353e" stroke-width="4.2" fill="none"/><path d="M1006.1 444.5 Q1013.3 463.5 995.4 475.7" stroke="#9699a9" stroke-width="4.5" fill="none"/><path d="M1016.7 447.3 Q1025.8 466.9 1006.0 478.5" stroke="#33353e" stroke-width="4.2" fill="none"/><path d="M1026.4 449.9 Q1033.6 468.9 1015.7 481.1" stroke="#9699a9" stroke-width="4.5" fill="none"/><path d="M1037.0 452.8 Q1046.1 472.3 1026.3 484.0" stroke="#33353e" stroke-width="4.2" fill="none"/><path d="M1046.6 455.4 Q1053.8 474.4 1035.9 486.6" stroke="#9699a9" stroke-width="4.5" fill="none"/><path d="M1057.2 458.3 Q1066.4 477.8 1046.5 489.5" stroke="#33353e" stroke-width="4.2" fill="none"/><path d="M1066.9 460.9 Q1074.1 479.9 1056.2 492.1" stroke="#9699a9" stroke-width="4.5" fill="none"/><path d="M1077.5 463.8 Q1086.6 483.3 1066.8 495.0" stroke="#33353e" stroke-width="4.2" fill="none"/><path d="M1087.2 466.4 Q1094.4 485.4 1076.5 497.6" stroke="#9699a9" stroke-width="4.5" fill="none"/><path d="M1097.8 469.3 Q1106.9 488.8 1087.1 500.5" stroke="#33353e" stroke-width="4.2" fill="none"/><path d="M1107.4 471.9 Q1114.6 490.9 1096.7 503.1" stroke="#9699a9" stroke-width="4.5" fill="none"/><path d="M1118.1 474.8 Q1127.2 494.3 1107.4 506.0" stroke="#33353e" stroke-width="4.2" fill="none"/><path d="M1127.7 477.4 Q1134.9 496.4 1117.0 508.6" stroke="#9699a9" stroke-width="4.5" fill="none"/></g></g>
<polygon points="681.7,390.7 692.4,359.5 1132.6,478.7 1121,510" fill="url(#wg)"/>
<polygon points="1132.6,478.7 1132.6,500.9 1121,510" fill="#040406"/>
<g fill="none" stroke="#060812" stroke-width="1.7" stroke-linejoin="round" stroke-linecap="round">
<polygon points="542.5,246 561,228 1302.5,429.5 1302.5,853 1284,871 542.5,670"/>
<polyline points="542.5,246 1284,447 1284,871"/>
<polyline points="1284,447 1302.5,429.5"/>
<polygon points="674.5,397.5 681.7,390.7 692.4,359.5 1132.6,478.7 1132.6,500.9 1133.1,737.3 1114.3,755 674.1,636.5"/>
<polyline points="674.5,397.5 1114.2,517.5 1114.3,755"/>
<polyline points="681.7,390.7 1121,510 1132.6,500.9"/>
<polyline points="1114.2,517.5 1121,510"/>
</g>
<g fill="none" stroke="#0a0a0a" stroke-width="1.1">
<path d="M912 431.5 L932.9 417.3 L970.5 427.4"/>
<path d="M936.2 414.3 L970.5 423.3" stroke-dasharray="3 3.6"/>
<path d="M949.5 423.6 L949.5 435.5 L961.2 425"/>
</g>
<path d="M907.1 434.8 L913 428 L916.5 432 Z" fill="#0a0a0a"/>
<path d="M944.5 422.5 Q939.5 425 939.3 430 Q939.5 433.6 942.2 433.6 Q945.3 433.4 945.2 430.6 Q945 428 942.5 428 Q940 428.2 939.5 430.5" fill="none" stroke="#0a0a0a" stroke-width="1.5"/>
</svg>
</body></html>
